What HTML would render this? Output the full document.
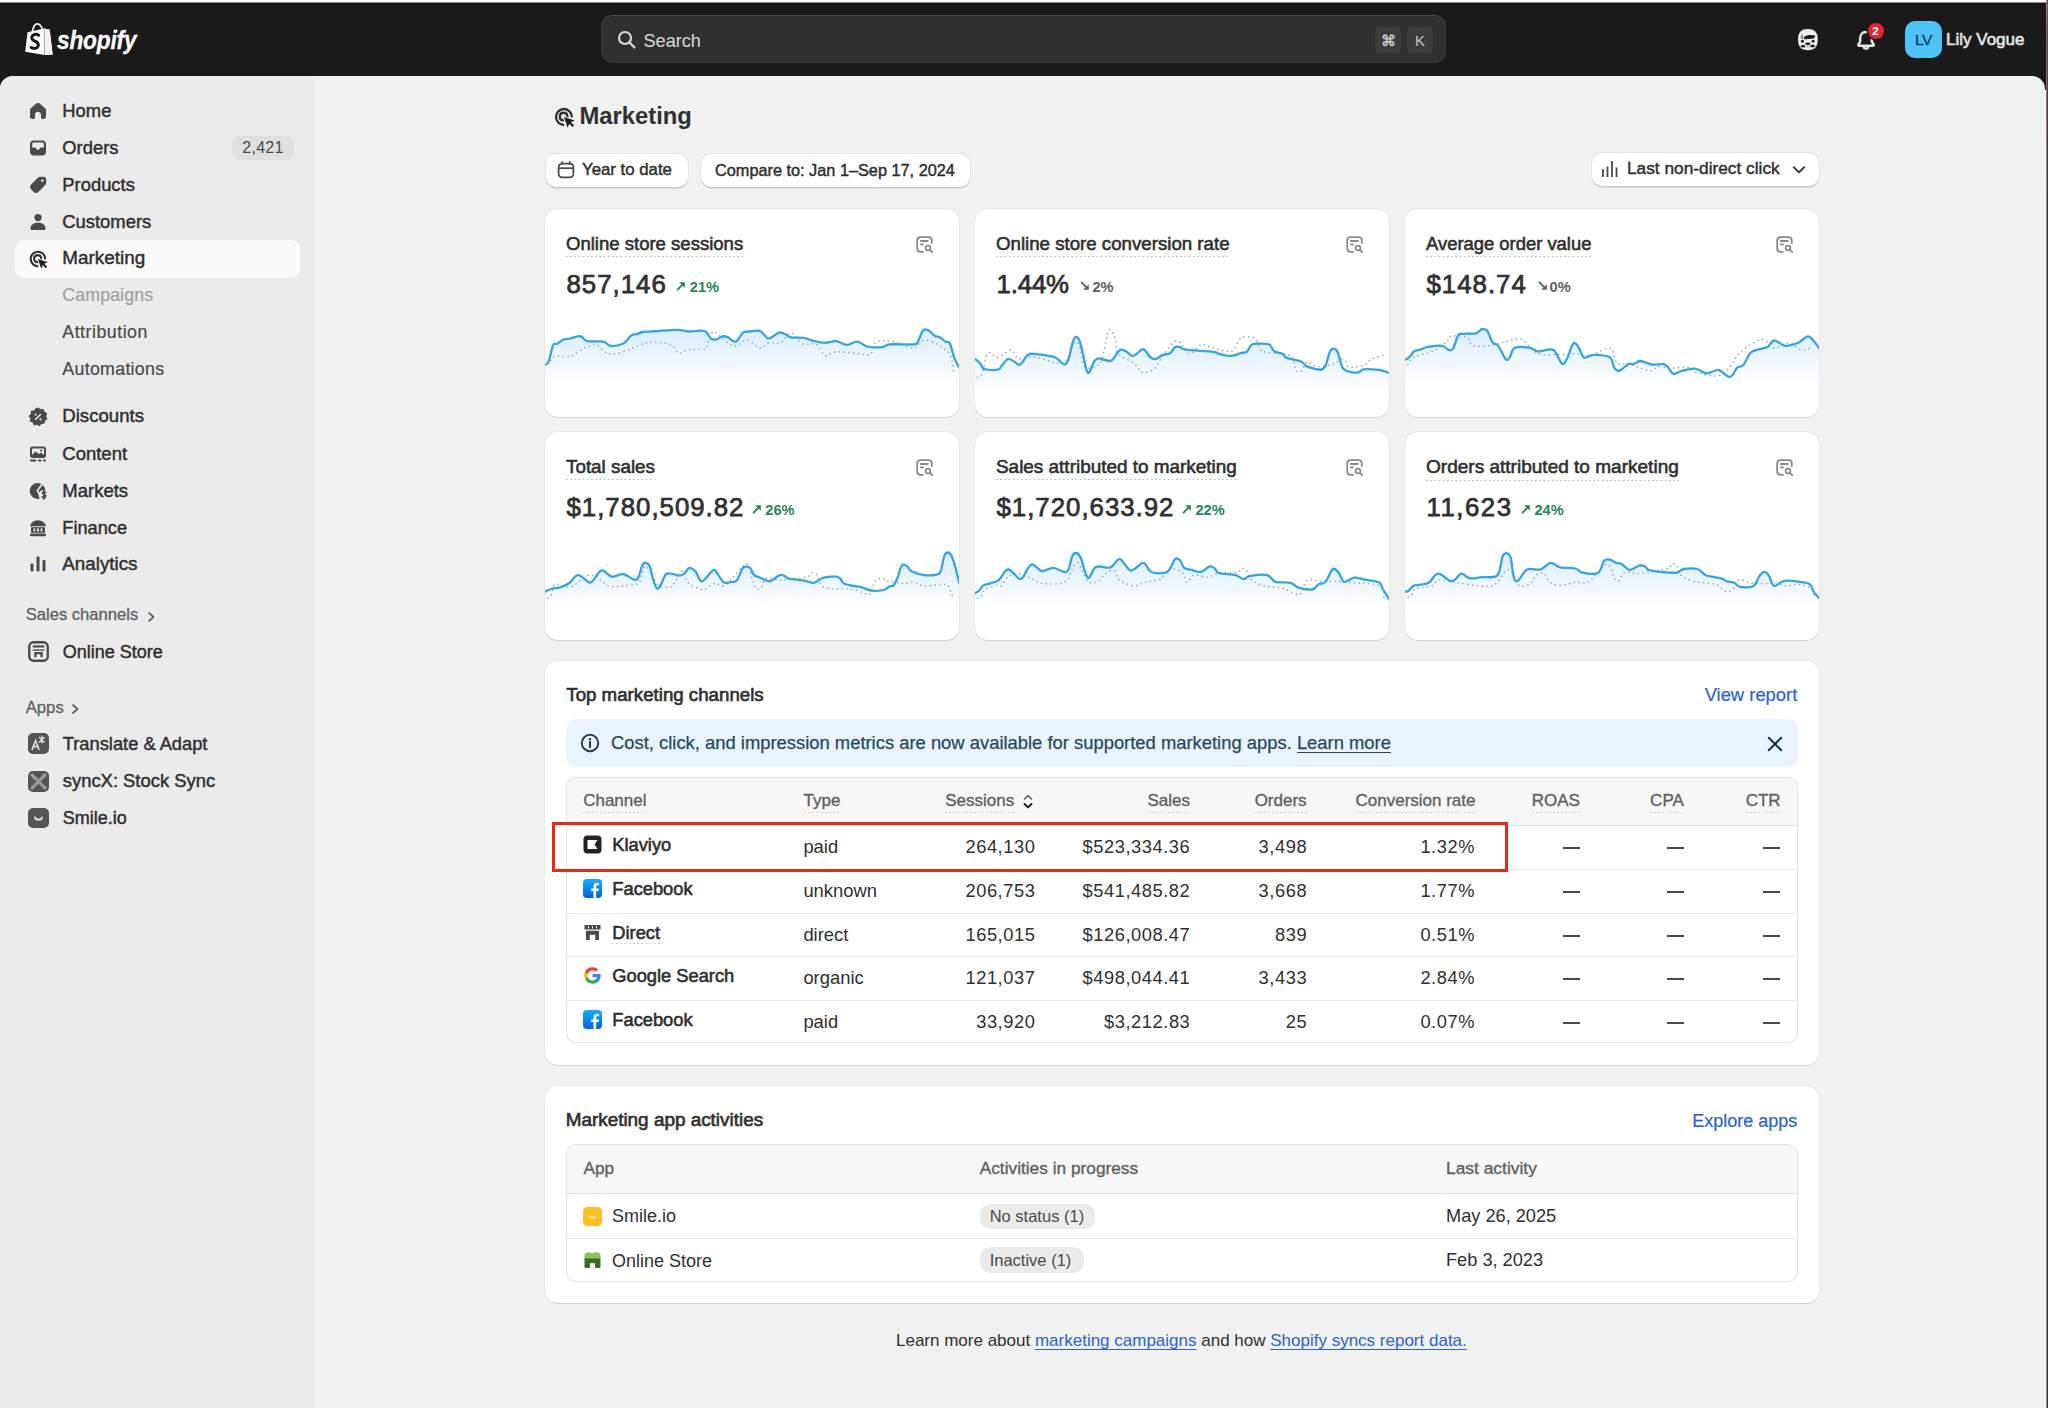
<!DOCTYPE html>
<html><head><meta charset="utf-8"><title>Marketing</title>
<style>
html,body{margin:0;padding:0;}
body{width:2048px;height:1408px;overflow:hidden;position:relative;background:#f1f1f1;font-family:"Liberation Sans",sans-serif;}
.r{position:absolute;display:block;}
.t{position:absolute;line-height:1;white-space:nowrap;}
.dot{background-image:linear-gradient(to right,#bdbdbd 45%,transparent 45%);background-size:4.2px 1.3px;background-repeat:repeat-x;background-position:0 100%;padding-bottom:3.5px;}
.dot2{background-image:linear-gradient(to right,#c4c4c4 45%,transparent 45%);background-size:4.2px 1.3px;background-repeat:repeat-x;background-position:0 100%;padding-bottom:3.5px;}
.dot3{background-image:linear-gradient(to right,#c4c4c4 45%,transparent 45%);background-size:4.2px 1.3px;background-repeat:repeat-x;background-position:0 100%;padding-bottom:2px;}
.lk{color:#2a64c9;text-decoration:underline;text-underline-offset:2.5px;text-decoration-thickness:1.2px;}
</style></head><body>
<div class="r" style="left:0px;top:0px;width:2048px;height:2px;background:#fdfdfd;"></div>
<div class="r" style="left:0px;top:2px;width:2048px;height:1px;background:#8c8c8c;"></div>
<div class="r" style="left:0px;top:3px;width:2048px;height:87px;background:#1a1a1a;"></div>
<div class="r" style="left:2046px;top:0px;width:1px;height:1408px;background:linear-gradient(#a08088 0,#806070 40px,#8a8890 200px,#8a8890);"></div>
<div class="r" style="left:2047px;top:0px;width:1px;height:1408px;background:linear-gradient(#7a5060 0,#6a4050 40px,#3c3a42 200px,#3c3a42);"></div>
<div class="r" style="left:0px;top:76px;width:2045px;height:1332px;background:#f1f1f1;border-radius:13px 13px 0 0;"></div>
<div class="r" style="left:2045px;top:90px;width:1px;height:1318px;background:#f8f8fb;"></div>
<div class="r" style="left:0px;top:76px;width:315px;height:1332px;background:#ebebeb;border-radius:13px 0 0 0;"></div>
<svg class="r" style="left:20px;top:18px;" width="40" height="42" viewBox="0 0 40 42"><path d="M7.5 14.3 L24.2 10.4 L29.7 11.7 L32.6 36.4 L24.4 37 L5.2 33.8 Z" fill="#fff"/><path d="M24.2 10.4 L29.7 11.7 L32.6 36.4 L24.4 37 Z" fill="#f3f3f3"/><path d="M24.3 10.8 L24.5 36.8" stroke="#a8a8a8" stroke-width="1"/><path d="M12.4 13.6 C13.4 8.6 15 5.9 17 5.9 C19 5.9 21 7.8 22.4 10.8" fill="none" stroke="#e6e6e6" stroke-width="1.9"/><path d="M18.7 17.4 C17.4 16.3 15.3 16.1 13.7 16.8 C11.6 17.7 11.3 20.3 12.7 21.7 C13.9 22.9 16.3 23.5 17.5 24.9 C19 26.5 18.3 29.3 16.1 30.1 C14.5 30.7 12.5 30.3 11.1 29.5" fill="none" stroke="#161616" stroke-width="3" stroke-linecap="round"/></svg>
<div class="t " style="left:56.5px;top:27.9px;font-size:25.2px;font-weight:700;-webkit-text-stroke:0.3px #ffffff;color:#ffffff;font-style:italic;letter-spacing:-0.2px;transform:scaleX(0.9);transform-origin:0 0;">shopify</div>
<div class="r" style="left:601px;top:15px;width:845px;height:48px;background:#303030;border-radius:12px;box-shadow:inset 0 1px 0 #474747, inset 0 0 0 1px #383838;"></div>
<svg class="r" style="left:617px;top:30px;" width="20" height="20" viewBox="0 0 20 20"><circle cx="8" cy="8" r="6" fill="none" stroke="#d8d8d8" stroke-width="2.2"/><path d="M12.4 12.4 L17.5 17.5" stroke="#d8d8d8" stroke-width="2.2" stroke-linecap="round"/></svg>
<div class="t " style="left:643.5px;top:31.7px;font-size:18.1px;-webkit-text-stroke:0.15px #d2d2d2;color:#d2d2d2;">Search</div>
<div class="r" style="left:1375px;top:27px;width:26px;height:26px;background:#3c3c3c;border-radius:6px;"></div>
<div class="r" style="left:1407px;top:27px;width:26px;height:26px;background:#3c3c3c;border-radius:6px;"></div>
<div class="t " style="left:1388.0px;transform:translateX(-50%);top:32.8px;font-size:15px;color:#c4c4c4;font-weight:700;">&#8984;</div>
<div class="t " style="left:1420.0px;transform:translateX(-50%);top:33.3px;font-size:15px;color:#c4c4c4;">K</div>
<svg class="r" style="left:1792px;top:24px;" width="32" height="32" viewBox="0 0 32 32"><path d="M15.9 5 C22.6 5 25.8 8.2 25.8 15.2 C25.8 22.6 22.8 26.2 15.9 26.2 C9 26.2 6 22.6 6 15.2 C6 8.2 9.2 5 15.9 5 Z" fill="#ececec"/><path d="M11.8 13.6 C13 11.2 17.5 10.4 23 11.6 C23.4 13 22.5 14.4 20.8 14.6 C17.5 15 15.2 15.4 13.4 15.2 C12.4 15.1 11.8 14.5 11.8 13.6 Z" fill="#161616"/><path d="M8.6 14.6 C8.8 12.6 9.4 11 10.6 10.2 C10.6 12 11 13.4 11.4 14.6 Z" fill="#161616" opacity="0.55"/><circle cx="10.4" cy="17.3" r="1.45" fill="#161616"/><circle cx="21.1" cy="17.3" r="1.45" fill="#161616"/><ellipse cx="15.8" cy="19.7" rx="2.7" ry="1.2" fill="#161616"/><ellipse cx="11" cy="22.2" rx="2.4" ry="1.3" fill="#161616"/><ellipse cx="20.6" cy="22.1" rx="2.4" ry="1.3" fill="#161616"/><ellipse cx="15.8" cy="22.6" rx="2.3" ry="1" fill="#b8b8b8"/></svg>
<svg class="r" style="left:1855px;top:29px;" width="22" height="22" viewBox="0 0 22 22"><path d="M11 3 C7.3 3 5.2 5.7 5.2 9.2 V12.6 L3.3 15.6 C3 16.1 3.4 16.8 4 16.8 H18 C18.6 16.8 19 16.1 18.7 15.6 L16.8 12.6 V9.2 C16.8 5.7 14.7 3 11 3 Z" fill="none" stroke="#e8e8e8" stroke-width="2.4"/><path d="M8.7 17.2 C8.7 18.6 9.7 19.6 11 19.6 C12.3 19.6 13.3 18.6 13.3 17.2" fill="none" stroke="#e8e8e8" stroke-width="2.4"/></svg>
<div class="r" style="left:1867.5px;top:22.5px;width:16.0px;height:16.0px;background:#e0262f;border-radius:50%;box-shadow:0 0 0 1.5px #1a1a1a;"></div>
<div class="t " style="left:1875.5px;transform:translateX(-50%);top:25.6px;font-size:11.5px;font-weight:700;color:#ffffff;">2</div>
<div class="r" style="left:1905px;top:21px;width:37px;height:37px;background:#4fc3f7;border-radius:10px;"></div>
<div class="t " style="left:1923.5px;transform:translateX(-50%);top:32.4px;font-size:15.5px;-webkit-text-stroke:0.3px #0a3a63;color:#0a3a63;letter-spacing:-0.5px;">LV</div>
<div class="t " style="left:1946.0px;top:30.6px;font-size:17.0px;-webkit-text-stroke:0.6px #e3e3e3;color:#e3e3e3;">Lily Vogue</div>
<div class="r" style="left:15px;top:240px;width:285px;height:38px;background:#fafafa;border-radius:9px;"></div>
<svg class="r" style="left:28px;top:101px;" width="20" height="20" viewBox="0 0 20 20"><path d="M8.3 2.6 C9.3 1.8 10.7 1.8 11.7 2.6 L16.9 7 C17.6 7.6 18 8.4 18 9.3 V15.8 C18 17 17 18 15.8 18 H14.4 C13.6 18 13 17.4 13 16.6 V13.8 C13 12.1 11.7 10.8 10 10.8 C8.3 10.8 7 12.1 7 13.8 V16.6 C7 17.4 6.4 18 5.6 18 H4.2 C3 18 2 17 2 15.8 V9.3 C2 8.4 2.4 7.6 3.1 7 Z" fill="#4a4a4a"/></svg>
<div class="t " style="left:62.3px;top:101.5px;font-size:18.4px;-webkit-text-stroke:0.45px #303030;color:#303030;">Home</div>
<svg class="r" style="left:28px;top:138px;" width="20" height="20" viewBox="0 0 20 20"><path d="M5.5 2.5 H14.5 C16.4 2.5 18 4.1 18 6 V14 C18 15.9 16.4 17.5 14.5 17.5 H5.5 C3.6 17.5 2 15.9 2 14 V6 C2 4.1 3.6 2.5 5.5 2.5 Z" fill="#4a4a4a"/><path d="M4.2 9.6 H6.8 C7.4 9.6 7.8 9.9 8.1 10.3 L8.7 11.2 C9 11.6 9.5 11.9 10 11.9 C10.5 11.9 11 11.6 11.3 11.2 L11.9 10.3 C12.2 9.9 12.6 9.6 13.2 9.6 H15.8 V6 C15.8 5.2 15.2 4.6 14.4 4.6 H5.6 C4.8 4.6 4.2 5.2 4.2 6 Z" fill="#ebebeb"/></svg>
<div class="t " style="left:62.3px;top:138.5px;font-size:18.4px;-webkit-text-stroke:0.45px #303030;color:#303030;">Orders</div>
<svg class="r" style="left:28px;top:175px;" width="20" height="20" viewBox="0 0 20 20"><path d="M12.2 1.8 H15.6 C17.1 1.8 18.2 2.9 18.2 4.4 V7.8 C18.2 8.7 17.8 9.5 17.2 10.1 L10.4 16.9 C9.1 18.2 7 18.2 5.7 16.9 L3.1 14.3 C1.8 13 1.8 10.9 3.1 9.6 L9.9 2.8 C10.5 2.2 11.3 1.8 12.2 1.8 Z" fill="#4a4a4a"/><circle cx="14.4" cy="5.6" r="1.3" fill="#dcdcdc"/></svg>
<div class="t " style="left:62.3px;top:175.5px;font-size:18.4px;-webkit-text-stroke:0.45px #303030;color:#303030;">Products</div>
<svg class="r" style="left:28px;top:212px;" width="20" height="20" viewBox="0 0 20 20"><circle cx="10" cy="5.6" r="3.6" fill="#4a4a4a"/><path d="M2.5 16.5 C2.5 12.8 5.8 10.8 10 10.8 C14.2 10.8 17.5 12.8 17.5 16.5 C17.5 17.3 16.9 18 16 18 H4 C3.1 18 2.5 17.3 2.5 16.5 Z" fill="#4a4a4a"/></svg>
<div class="t " style="left:62.3px;top:212.7px;font-size:18.4px;-webkit-text-stroke:0.45px #303030;color:#303030;">Customers</div>
<svg class="r" style="left:28px;top:249px;" width="20" height="20" viewBox="0 0 20 20"><path d="M17.1 9.4 A7.2 7.2 0 1 0 9.4 17.1" fill="none" stroke="#303030" stroke-width="2.1" stroke-linecap="round"/><path d="M13.1 9.2 A3.5 3.5 0 1 0 9.2 13.1" fill="none" stroke="#303030" stroke-width="2.1" stroke-linecap="round"/><path d="M10 10 L19.8 13.2 L16.2 14.8 L19.2 17.8 L17.8 19.2 L14.8 16.2 L13.2 19.8 Z" fill="#1f1f1f"/></svg>
<div class="t " style="left:62.3px;top:249.3px;font-size:18.9px;-webkit-text-stroke:0.45px #303030;color:#303030;">Marketing</div>
<svg class="r" style="left:28px;top:407px;" width="20" height="20" viewBox="0 0 20 20"><path transform="translate(10 10) scale(1.12) translate(-10 -10)" d="M10 1.5 L12.3 3 L15 2.8 L15.8 5.4 L18.2 6.7 L17.3 9.3 L18.5 11.8 L16.2 13.3 L15.8 16 L13 16.2 L11.2 18.3 L8.9 16.9 L6.2 17.6 L5.3 15 L2.6 14 L3.2 11.3 L1.5 9.2 L3.5 7.3 L3.7 4.5 L6.4 4.1 L8 1.9 Z" fill="#4a4a4a"/><path d="M7.2 12.8 L12.8 7.2" stroke="#ebebeb" stroke-width="1.6"/><circle cx="7.6" cy="7.6" r="1.1" fill="#ebebeb"/><circle cx="12.4" cy="12.4" r="1.1" fill="#ebebeb"/></svg>
<div class="t " style="left:62.3px;top:407.4px;font-size:18.6px;-webkit-text-stroke:0.45px #303030;color:#303030;">Discounts</div>
<svg class="r" style="left:28px;top:444px;" width="20" height="20" viewBox="0 0 20 20"><path d="M4.5 2.5 H15.5 C16.9 2.5 18 3.6 18 5 V11.5 C18 12.9 16.9 14 15.5 14 H4.5 C3.1 14 2 12.9 2 11.5 V5 C2 3.6 3.1 2.5 4.5 2.5 Z" fill="#4a4a4a"/><path d="M4 11 L7.5 7.5 L11 10 L13 8.5 L16 11 V5.2 C16 4.8 15.7 4.5 15.3 4.5 H4.7 C4.3 4.5 4 4.8 4 5.2 Z" fill="#ebebeb"/><circle cx="13.2" cy="6.6" r="1.1" fill="#4a4a4a"/><rect x="2" y="15.6" width="6.5" height="1.9" rx=".9" fill="#4a4a4a"/><rect x="10" y="15.6" width="3.5" height="1.9" rx=".9" fill="#4a4a4a"/><rect x="15" y="15.6" width="3" height="1.9" rx=".9" fill="#4a4a4a"/></svg>
<div class="t " style="left:62.3px;top:444.7px;font-size:18.5px;-webkit-text-stroke:0.45px #303030;color:#303030;">Content</div>
<svg class="r" style="left:28px;top:481px;" width="20" height="20" viewBox="0 0 20 20"><circle cx="9.6" cy="10" r="7.9" fill="#4a4a4a"/><path d="M14.2 3.2 L9.4 9.6 L12.4 14.6" fill="none" stroke="#ebebeb" stroke-width="1.7"/><circle cx="15.6" cy="14" r="5" fill="#ebebeb"/><path d="M17.6 11.4 C17.1 10.9 16.4 10.7 15.7 10.8 C14.6 11 14.3 12.3 15.1 12.9 C15.8 13.4 17.3 13.6 17.6 14.7 C17.9 15.8 17 16.8 15.8 16.8 C15 16.8 14.4 16.5 14 16 M15.8 9.6 V18.2" fill="none" stroke="#4a4a4a" stroke-width="1.6" stroke-linecap="round"/></svg>
<div class="t " style="left:62.3px;top:481.5px;font-size:18.5px;-webkit-text-stroke:0.45px #303030;color:#303030;">Markets</div>
<svg class="r" style="left:28px;top:518px;" width="20" height="20" viewBox="0 0 20 20"><path d="M2 8.2 C2.4 5.2 5.8 2.2 10 2.2 C14.2 2.2 17.6 5.2 18 8.2 Z" fill="#4a4a4a"/><rect x="3" y="9.2" width="14" height="5.6" fill="#4a4a4a"/><rect x="5.6" y="10.4" width="1.7" height="3.2" fill="#ebebeb"/><rect x="9.15" y="10.4" width="1.7" height="3.2" fill="#ebebeb"/><rect x="12.7" y="10.4" width="1.7" height="3.2" fill="#ebebeb"/><rect x="2" y="15.4" width="16" height="2.8" rx="1.2" fill="#4a4a4a"/></svg>
<div class="t " style="left:62.3px;top:518.8px;font-size:18.2px;-webkit-text-stroke:0.45px #303030;color:#303030;">Finance</div>
<svg class="r" style="left:28px;top:554px;" width="20" height="20" viewBox="0 0 20 20"><rect x="2.5" y="9.5" width="3" height="8" rx="1" fill="#4a4a4a"/><rect x="8.5" y="2.5" width="3" height="15" rx="1" fill="#4a4a4a"/><rect x="14.5" y="6" width="3" height="11.5" rx="1" fill="#4a4a4a"/></svg>
<div class="t " style="left:62.3px;top:555.1px;font-size:18.8px;-webkit-text-stroke:0.45px #303030;color:#303030;">Analytics</div>
<div class="r" style="left:232px;top:136px;width:62px;height:24px;background:#e0e0e0;border-radius:8px;"></div>
<div class="t " style="left:263.0px;transform:translateX(-50%);top:140.2px;font-size:16px;color:#4a4a4a;letter-spacing:0.3px;">2,421</div>
<div class="t " style="left:62.3px;top:287.4px;font-size:17.8px;-webkit-text-stroke:0.2px #a1a1a1;color:#a1a1a1;letter-spacing:0.1px;">Campaigns</div>
<div class="t " style="left:62.3px;top:324.2px;font-size:17.8px;-webkit-text-stroke:0.2px #4a4a4a;color:#4a4a4a;letter-spacing:0.5px;">Attribution</div>
<div class="t " style="left:62.3px;top:360.9px;font-size:17.8px;-webkit-text-stroke:0.2px #4a4a4a;color:#4a4a4a;letter-spacing:0.3px;">Automations</div>
<div class="t " style="left:25.7px;top:607.2px;font-size:16.6px;-webkit-text-stroke:0.3px #616161;color:#616161;">Sales channels</div>
<svg class="r" style="left:146px;top:611px;" width="10" height="12" viewBox="0 0 10 12"><path d="M3 2 L7.5 6 L3 10" fill="none" stroke="#616161" stroke-width="1.7" stroke-linecap="round" stroke-linejoin="round"/></svg>
<svg class="r" style="left:28px;top:641px;" width="21" height="21" viewBox="0 0 20 20"><rect x="1.2" y="1.2" width="17.6" height="17.6" rx="4" fill="none" stroke="#4a4a4a" stroke-width="2.2"/><rect x="4.5" y="4.2" width="11" height="2" fill="#4a4a4a"/><path d="M4.5 8 H15.5 V9.3 H4.5 Z" fill="#4a4a4a"/><path d="M6 10.5 H14 V15.5 H11.8 V12.5 H8.2 V15.5 H6 Z" fill="#4a4a4a"/></svg>
<div class="t " style="left:62.8px;top:642.8px;font-size:18.0px;-webkit-text-stroke:0.45px #303030;color:#303030;">Online Store</div>
<div class="t " style="left:25.7px;top:699.9px;font-size:16.7px;-webkit-text-stroke:0.3px #616161;color:#616161;">Apps</div>
<svg class="r" style="left:70px;top:703px;" width="10" height="12" viewBox="0 0 10 12"><path d="M3 2 L7.5 6 L3 10" fill="none" stroke="#616161" stroke-width="1.7" stroke-linecap="round" stroke-linejoin="round"/></svg>
<svg class="r" style="left:28px;top:733px;" width="21" height="21" viewBox="0 0 21 21"><rect x="0" y="0" width="21" height="21" rx="5" fill="#555"/><path d="M4 17 L7.6 7.5 L11.2 17 M5.4 13.6 H9.8" stroke="#ddd" stroke-width="1.6" fill="none"/><path d="M11 4 L16.5 9.5 M16.5 4 L11 9.5 M13.8 2.8 V10.6" stroke="#ddd" stroke-width="1.3"/></svg>
<div class="t " style="left:62.8px;top:735.1px;font-size:18.3px;-webkit-text-stroke:0.45px #303030;color:#303030;">Translate &amp; Adapt</div>
<svg class="r" style="left:28px;top:771px;" width="21" height="21" viewBox="0 0 21 21"><rect x="0" y="0" width="21" height="21" rx="5" fill="#555"/><path d="M4 4 C8 7.5 13 13.5 17 17 M17 4 C13 7.5 8 13.5 4 17" stroke="#9a9a9a" stroke-width="3.2" fill="none" stroke-linecap="round"/></svg>
<div class="t " style="left:62.8px;top:772.1px;font-size:18.4px;-webkit-text-stroke:0.45px #303030;color:#303030;">syncX: Stock Sync</div>
<svg class="r" style="left:28px;top:808px;" width="21" height="20" viewBox="0 0 21 20"><rect x="0" y="0" width="21" height="20" rx="5" fill="#555"/><path d="M7 9.5 C7.5 12.5 13.5 12.5 14 9.5" stroke="#e8e8e8" stroke-width="1.8" fill="none" stroke-linecap="round"/></svg>
<div class="t " style="left:62.8px;top:809.0px;font-size:18.0px;-webkit-text-stroke:0.45px #303030;color:#303030;">Smile.io</div>
<svg class="r" style="left:553px;top:106px;" width="22" height="22" viewBox="0 0 20 20"><path d="M17.1 9.4 A7.2 7.2 0 1 0 9.4 17.1" fill="none" stroke="#303030" stroke-width="2.1" stroke-linecap="round"/><path d="M13.1 9.2 A3.5 3.5 0 1 0 9.2 13.1" fill="none" stroke="#303030" stroke-width="2.1" stroke-linecap="round"/><path d="M10 10 L19.8 13.2 L16.2 14.8 L19.2 17.8 L17.8 19.2 L14.8 16.2 L13.2 19.8 Z" fill="#1f1f1f"/></svg>
<div class="t " style="left:579.5px;top:104.0px;font-size:23.8px;font-weight:700;color:#303030;">Marketing</div>
<div class="r" style="left:546px;top:154px;width:142px;height:33px;background:#fff;border-radius:10px;box-shadow:0 1.5px 0 #c9c9c9, 0 0 0 1px #e4e4e4;"></div>
<svg class="r" style="left:557px;top:161px;" width="18" height="18" viewBox="0 0 18 18"><rect x="1.6" y="2.6" width="14.8" height="13.8" rx="3.6" fill="none" stroke="#4a4a4a" stroke-width="1.8"/><path d="M1.8 7.2 H16.2" stroke="#4a4a4a" stroke-width="1.8"/><path d="M5.2 0.8 V3 M12.8 0.8 V3" stroke="#4a4a4a" stroke-width="1.6" stroke-linecap="round"/></svg>
<div class="t " style="left:582.0px;top:162.3px;font-size:16.8px;-webkit-text-stroke:0.45px #303030;color:#303030;">Year to date</div>
<div class="r" style="left:701px;top:154px;width:269px;height:33px;background:#fff;border-radius:10px;box-shadow:0 1.5px 0 #c9c9c9, 0 0 0 1px #e4e4e4;"></div>
<div class="t " style="left:715.0px;top:161.6px;font-size:16.3px;-webkit-text-stroke:0.45px #303030;color:#303030;">Compare to: Jan 1–Sep 17, 2024</div>
<div class="r" style="left:1592px;top:153px;width:227px;height:33px;background:#fff;border-radius:10px;box-shadow:0 1.5px 0 #c9c9c9, 0 0 0 1px #e4e4e4;"></div>
<svg class="r" style="left:1601px;top:160px;" width="20" height="18" viewBox="0 0 20 18"><path d="M2 9 V17 M6.5 6.5 V17 M11 1 V17 M15.5 7.5 V17" stroke="#4a4a4a" stroke-width="1.8"/></svg>
<div class="t " style="left:1627.0px;top:159.9px;font-size:17.3px;-webkit-text-stroke:0.45px #303030;color:#303030;">Last non-direct click</div>
<svg class="r" style="left:1792px;top:165px;" width="14" height="10" viewBox="0 0 14 10"><path d="M1.8 2.2 L7 7.4 L12.2 2.2" fill="none" stroke="#303030" stroke-width="1.9" stroke-linecap="round" stroke-linejoin="round"/></svg>
<div class="r" style="left:545px;top:209px;width:414px;height:208px;background:#fff;border-radius:13px;box-shadow:0 1px 0 #d4d4d4, 0 0 0 1px #e9e9e9;"></div>
<svg class="r" style="left:545px;top:209px;border-radius:13px;overflow:hidden" width="414" height="208" viewBox="0 0 414 208"><defs><linearGradient id="g0" x1="0" y1="121" x2="0" y2="183" gradientUnits="userSpaceOnUse"><stop offset="0" stop-color="#d3e9f8" stop-opacity="0.85"/><stop offset="0.55" stop-color="#e6f2fb" stop-opacity="0.6"/><stop offset="1" stop-color="#ffffff" stop-opacity="0"/></linearGradient><clipPath id="c0"><rect x="0" y="0" width="414" height="208" rx="13"/></clipPath></defs><g clip-path="url(#c0)"><path d="M-0.2 155.8 C0.4 155.3 2.3 155.8 3.6 152.6 C5.0 149.4 6.5 139.4 7.9 136.4 C9.3 133.4 10.4 135.8 12.2 134.8 C14.0 133.8 16.5 131.4 18.6 130.5 C20.8 129.6 22.8 130.0 25.1 129.5 C27.4 129.0 30.6 127.6 32.6 127.3 C34.6 127.0 35.3 127.1 36.9 127.9 C38.5 128.7 38.7 131.4 42.3 132.2 C45.9 133.0 54.5 131.9 58.4 132.7 C62.3 133.5 62.5 136.7 65.9 137.0 C69.3 137.3 75.4 136.1 78.8 134.3 C82.2 132.5 84.1 127.7 86.3 126.2 C88.4 124.7 89.7 125.7 91.7 125.2 C93.7 124.7 94.5 123.5 98.1 123.0 C101.7 122.5 107.5 122.4 113.2 122.0 C118.9 121.6 127.5 120.8 132.5 120.9 C137.5 121.0 138.7 122.3 143.2 122.5 C147.7 122.7 155.6 120.8 159.4 122.0 C163.2 123.2 163.8 128.1 165.8 129.5 C167.8 130.9 169.2 130.9 171.2 130.5 C173.2 130.1 175.6 127.7 177.6 127.3 C179.6 127.0 181.4 127.7 183.0 128.4 C184.6 129.1 185.9 131.0 187.3 131.6 C188.7 132.2 189.8 133.5 191.6 132.2 C193.4 130.9 195.8 125.2 198.0 123.6 C200.2 122.0 201.7 122.8 204.5 122.5 C207.3 122.2 211.8 120.8 214.7 121.9 C217.7 123.0 220.2 127.8 222.2 128.9 C224.2 130.0 224.5 129.3 226.5 128.4 C228.5 127.5 231.7 124.1 234.0 123.6 C236.3 123.1 238.4 124.4 240.4 125.2 C242.4 126.0 242.7 127.8 245.8 128.4 C248.8 129.0 255.1 128.4 258.7 128.9 C262.3 129.4 263.7 130.8 267.3 131.6 C270.9 132.4 276.3 133.7 280.2 133.8 C284.1 133.9 287.3 131.8 290.9 132.2 C294.5 132.5 298.1 135.8 301.7 135.9 C305.3 136.0 309.0 132.4 312.4 132.7 C315.8 133.0 318.0 136.6 322.1 137.5 C326.2 138.4 333.3 138.5 337.1 138.1 C340.9 137.8 339.5 135.8 344.7 135.4 C349.9 134.9 363.6 135.8 368.3 135.4 C372.9 135.0 371.0 135.5 372.6 133.2 C374.2 130.9 376.2 123.4 378.0 121.4 C379.8 119.4 381.3 120.5 383.3 121.4 C385.3 122.3 387.8 125.6 389.8 126.8 C391.8 128.0 393.3 127.4 395.1 128.4 C396.9 129.4 398.9 131.7 400.5 132.7 C402.1 133.7 403.4 131.7 404.8 134.3 C406.2 136.9 407.6 144.4 409.1 148.3 C410.6 152.2 413.1 156.3 413.9 157.9 L413.9 208 L-0.2 208 Z" fill="url(#g0)"/><path d="M5.7 151.5 C6.4 150.8 7.3 147.8 10.0 147.2 C12.7 146.6 19.0 147.8 21.9 147.7 C24.8 147.6 24.2 148.2 27.2 146.7 C30.2 145.2 36.0 140.4 40.1 138.6 C44.2 136.8 48.7 135.2 51.9 135.9 C55.1 136.6 56.6 141.4 59.5 142.9 C62.4 144.4 64.8 145.4 69.1 145.0 C73.4 144.6 80.2 142.0 85.2 140.2 C90.2 138.4 95.1 135.5 99.2 134.3 C103.3 133.1 105.5 132.9 110.0 133.2 C114.5 133.5 122.2 134.1 126.1 135.9 C130.0 137.7 130.6 143.2 133.6 144.0 C136.6 144.8 139.8 141.4 144.3 140.7 C148.8 140.0 157.3 140.8 160.4 139.7 C163.4 138.6 161.5 137.0 162.6 134.3 C163.7 131.6 165.5 125.3 166.9 123.6 C168.3 121.9 167.6 121.9 171.2 124.1 C174.8 126.3 183.2 135.8 188.4 137.0 C193.6 138.2 197.9 130.8 202.3 131.1 C206.7 131.5 211.0 138.7 214.7 139.1 C218.4 139.6 220.9 134.7 224.3 133.8 C227.7 132.9 231.3 135.4 235.1 133.8 C238.9 132.2 243.1 123.9 246.9 124.1 C250.6 124.3 253.5 132.9 257.6 134.8 C261.7 136.7 267.8 133.4 271.6 135.4 C275.4 137.4 277.0 145.4 280.2 146.7 C283.4 147.9 285.5 143.3 290.9 142.9 C296.3 142.5 307.0 144.0 312.4 144.5 C317.8 145.0 320.7 146.5 323.2 146.1 C325.7 145.8 326.1 144.6 327.5 142.4 C328.9 140.2 328.2 134.3 331.8 132.7 C335.4 131.1 342.9 131.6 349.0 132.7 C355.1 133.8 362.9 139.4 368.3 139.1 C373.7 138.8 375.3 130.3 381.2 131.1 C387.1 131.9 399.1 138.3 403.7 144.0 C408.4 149.7 408.2 161.9 409.1 165.5" fill="none" stroke="#93aebd" stroke-width="1.6" stroke-dasharray="0.2 4.6" stroke-linecap="round"/><path d="M-0.2 155.8 C0.4 155.3 2.3 155.8 3.6 152.6 C5.0 149.4 6.5 139.4 7.9 136.4 C9.3 133.4 10.4 135.8 12.2 134.8 C14.0 133.8 16.5 131.4 18.6 130.5 C20.8 129.6 22.8 130.0 25.1 129.5 C27.4 129.0 30.6 127.6 32.6 127.3 C34.6 127.0 35.3 127.1 36.9 127.9 C38.5 128.7 38.7 131.4 42.3 132.2 C45.9 133.0 54.5 131.9 58.4 132.7 C62.3 133.5 62.5 136.7 65.9 137.0 C69.3 137.3 75.4 136.1 78.8 134.3 C82.2 132.5 84.1 127.7 86.3 126.2 C88.4 124.7 89.7 125.7 91.7 125.2 C93.7 124.7 94.5 123.5 98.1 123.0 C101.7 122.5 107.5 122.4 113.2 122.0 C118.9 121.6 127.5 120.8 132.5 120.9 C137.5 121.0 138.7 122.3 143.2 122.5 C147.7 122.7 155.6 120.8 159.4 122.0 C163.2 123.2 163.8 128.1 165.8 129.5 C167.8 130.9 169.2 130.9 171.2 130.5 C173.2 130.1 175.6 127.7 177.6 127.3 C179.6 127.0 181.4 127.7 183.0 128.4 C184.6 129.1 185.9 131.0 187.3 131.6 C188.7 132.2 189.8 133.5 191.6 132.2 C193.4 130.9 195.8 125.2 198.0 123.6 C200.2 122.0 201.7 122.8 204.5 122.5 C207.3 122.2 211.8 120.8 214.7 121.9 C217.7 123.0 220.2 127.8 222.2 128.9 C224.2 130.0 224.5 129.3 226.5 128.4 C228.5 127.5 231.7 124.1 234.0 123.6 C236.3 123.1 238.4 124.4 240.4 125.2 C242.4 126.0 242.7 127.8 245.8 128.4 C248.8 129.0 255.1 128.4 258.7 128.9 C262.3 129.4 263.7 130.8 267.3 131.6 C270.9 132.4 276.3 133.7 280.2 133.8 C284.1 133.9 287.3 131.8 290.9 132.2 C294.5 132.5 298.1 135.8 301.7 135.9 C305.3 136.0 309.0 132.4 312.4 132.7 C315.8 133.0 318.0 136.6 322.1 137.5 C326.2 138.4 333.3 138.5 337.1 138.1 C340.9 137.8 339.5 135.8 344.7 135.4 C349.9 134.9 363.6 135.8 368.3 135.4 C372.9 135.0 371.0 135.5 372.6 133.2 C374.2 130.9 376.2 123.4 378.0 121.4 C379.8 119.4 381.3 120.5 383.3 121.4 C385.3 122.3 387.8 125.6 389.8 126.8 C391.8 128.0 393.3 127.4 395.1 128.4 C396.9 129.4 398.9 131.7 400.5 132.7 C402.1 133.7 403.4 131.7 404.8 134.3 C406.2 136.9 407.6 144.4 409.1 148.3 C410.6 152.2 413.1 156.3 413.9 157.9" fill="none" stroke="#35a5dd" stroke-width="2.3" stroke-linejoin="round" stroke-linecap="round"/></g></svg>
<div class="t " style="left:566.0px;top:234.8px;font-size:18.54px;-webkit-text-stroke:0.6px #303030;color:#303030;"><span class="dot">Online store sessions</span></div>
<svg class="r" style="left:915px;top:235px;" width="19" height="19" viewBox="0 0 19 19"><path d="M8 16.8 H5.5 C3.6 16.8 2.2 15.4 2.2 13.5 V5.5 C2.2 3.6 3.6 2.2 5.5 2.2 H13.5 C15.4 2.2 16.8 3.6 16.8 5.5 V8" fill="none" stroke="#8a8a8a" stroke-width="1.8" stroke-linecap="round"/><path d="M5.8 6 H12.8 M5.8 9.4 H8" stroke="#8a8a8a" stroke-width="1.8" stroke-linecap="round"/><circle cx="13" cy="13" r="2.4" fill="none" stroke="#8a8a8a" stroke-width="1.7"/><path d="M14.8 14.8 L17.2 17.2" stroke="#8a8a8a" stroke-width="1.8" stroke-linecap="round"/></svg>
<div class="t val0" style="left:566.5px;top:271.9px;font-size:25.8px;-webkit-text-stroke:0.75px #303030;color:#303030;letter-spacing:1.0px;">857,146</div>
<div class="r" style="left:975px;top:209px;width:414px;height:208px;background:#fff;border-radius:13px;box-shadow:0 1px 0 #d4d4d4, 0 0 0 1px #e9e9e9;"></div>
<svg class="r" style="left:975px;top:209px;border-radius:13px;overflow:hidden" width="414" height="208" viewBox="0 0 414 208"><defs><linearGradient id="g1" x1="0" y1="128" x2="0" y2="190" gradientUnits="userSpaceOnUse"><stop offset="0" stop-color="#d3e9f8" stop-opacity="0.85"/><stop offset="0.55" stop-color="#e6f2fb" stop-opacity="0.6"/><stop offset="1" stop-color="#ffffff" stop-opacity="0"/></linearGradient><clipPath id="c1"><rect x="0" y="0" width="414" height="208" rx="13"/></clipPath></defs><g clip-path="url(#c1)"><path d="M0.1 150.0 C1.0 150.8 3.7 152.9 5.3 154.6 C6.8 156.3 6.5 159.2 9.4 160.2 C12.3 161.2 19.8 161.3 22.7 160.7 C25.6 160.1 25.1 158.4 26.8 156.6 C28.5 154.8 30.8 150.7 32.9 150.0 C34.9 149.3 37.1 151.6 39.1 152.5 C41.2 153.4 43.0 156.6 45.2 155.6 C47.4 154.6 50.2 148.2 52.4 146.4 C54.6 144.6 54.5 144.6 58.6 144.8 C62.7 145.0 72.9 146.4 77.0 147.4 C81.1 148.3 81.2 149.1 83.2 150.5 C85.3 151.9 87.6 155.6 89.3 155.6 C91.0 155.6 92.0 154.1 93.4 150.5 C94.8 146.9 96.3 137.9 97.5 134.1 C98.7 130.3 99.4 128.2 100.6 127.9 C101.8 127.5 103.5 129.3 104.7 132.0 C105.9 134.7 106.4 139.0 107.8 144.3 C109.2 149.6 111.0 162.4 112.9 163.8 C114.8 165.2 117.4 154.9 119.1 152.5 C120.8 150.1 121.7 149.8 123.2 149.5 C124.7 149.2 126.1 150.2 128.3 150.5 C130.5 150.8 133.8 153.1 136.5 151.5 C139.2 149.9 142.3 142.7 144.7 141.2 C147.1 139.7 148.9 141.4 150.9 142.3 C153.0 143.2 155.3 146.4 157.0 146.9 C158.7 147.4 159.2 146.4 161.1 145.3 C163.0 144.2 165.9 139.7 168.3 140.2 C170.7 140.7 173.5 146.8 175.5 148.4 C177.5 150.0 178.5 150.4 180.6 150.0 C182.6 149.6 185.4 146.8 187.8 145.9 C190.2 144.9 193.0 145.6 195.0 144.3 C197.0 143.0 198.4 139.2 200.1 138.2 C201.8 137.2 203.1 137.8 205.0 138.2 C206.9 138.6 205.7 139.9 211.2 140.7 C216.7 141.5 232.3 142.1 237.8 142.8 C243.3 143.5 240.9 144.1 244.0 144.8 C247.1 145.5 252.5 147.1 256.3 146.9 C260.0 146.7 263.9 144.5 266.5 143.8 C269.1 143.1 270.0 144.2 271.7 142.8 C273.4 141.4 274.7 137.0 276.8 135.6 C278.8 134.2 281.1 134.6 284.0 134.6 C286.9 134.6 291.7 134.3 294.2 135.6 C296.8 136.9 297.1 140.8 299.3 142.3 C301.5 143.8 305.4 143.7 307.5 144.8 C309.6 145.9 308.5 147.6 311.6 148.9 C314.7 150.2 322.8 151.1 326.0 152.5 C329.2 153.9 329.2 156.0 331.1 157.1 C333.0 158.2 334.7 158.6 337.3 159.2 C339.9 159.8 344.3 161.1 346.5 160.7 C348.7 160.3 349.2 159.5 350.6 156.6 C352.0 153.7 353.3 146.1 354.7 143.3 C356.1 140.5 357.4 139.6 358.8 139.7 C360.2 139.8 361.4 140.6 362.9 143.8 C364.4 147.1 365.6 155.9 368.0 159.2 C370.4 162.4 374.7 162.6 377.3 163.3 C379.9 164.0 381.4 163.8 383.4 163.3 C385.5 162.8 386.0 160.5 389.6 160.2 C393.2 159.8 400.9 160.6 405.0 161.2 C409.1 161.8 412.7 163.4 414.2 163.8 L414.2 208 L0.1 208 Z" fill="url(#g1)"/><path d="M2.7 168.4 C3.5 167.7 5.6 168.3 7.3 164.3 C9.0 160.3 10.3 147.0 12.9 144.3 C15.5 141.7 18.9 148.9 22.7 148.4 C26.6 147.9 32.6 141.0 36.0 141.2 C39.4 141.4 39.8 148.5 43.2 149.5 C46.6 150.5 51.0 146.9 56.5 147.4 C62.0 147.9 71.7 151.4 76.0 152.5 C80.3 153.6 79.5 154.4 82.2 154.1 C84.9 153.8 89.7 153.7 92.4 150.5 C95.1 147.3 96.7 137.7 98.6 135.1 C100.5 132.5 101.8 131.3 103.7 135.1 C105.6 138.9 106.4 154.4 109.8 157.7 C113.2 161.0 121.0 158.0 124.2 155.1 C127.5 152.2 127.9 145.2 129.3 140.2 C130.7 135.1 131.4 128.1 132.4 124.8 C133.4 121.6 134.1 119.8 135.5 120.7 C136.9 121.6 139.4 126.1 140.6 130.0 C141.8 133.9 139.8 140.4 142.7 144.3 C145.6 148.2 154.2 150.8 158.0 153.6 C161.8 156.4 163.3 159.5 165.2 161.2 C167.1 162.9 166.9 164.1 169.3 163.8 C171.7 163.6 176.7 162.3 179.6 159.7 C182.5 157.1 183.7 152.7 186.8 148.4 C189.9 144.1 195.0 136.7 198.0 134.1 C201.0 131.5 202.3 131.2 205.0 133.0 C207.7 134.8 210.6 144.4 214.2 144.8 C217.8 145.2 222.7 136.6 226.5 135.6 C230.3 134.6 231.8 137.6 236.8 138.7 C241.8 139.8 251.7 143.7 256.3 142.3 C260.9 140.9 262.4 132.9 264.5 130.5 C266.6 128.1 266.5 128.1 269.1 127.9 C271.7 127.7 276.7 127.1 279.9 129.5 C283.1 131.9 282.3 139.5 288.1 142.3 C293.9 145.1 309.2 143.2 314.7 146.4 C320.2 149.5 318.9 158.6 320.9 161.2 C323.0 163.8 325.1 163.2 327.0 161.8 C328.9 160.4 329.5 153.7 332.1 153.0 C334.7 152.3 338.1 157.3 342.4 157.7 C346.7 158.0 353.9 156.3 357.8 155.1 C361.7 153.9 363.8 150.8 366.0 150.5 C368.2 150.2 369.7 151.7 371.1 153.0 C372.5 154.3 371.3 157.7 374.2 158.2 C377.1 158.7 384.8 157.5 388.6 156.1 C392.4 154.7 392.9 151.8 396.8 150.0 C400.7 148.2 409.5 146.1 412.1 145.3" fill="none" stroke="#93aebd" stroke-width="1.6" stroke-dasharray="0.2 4.6" stroke-linecap="round"/><path d="M0.1 150.0 C1.0 150.8 3.7 152.9 5.3 154.6 C6.8 156.3 6.5 159.2 9.4 160.2 C12.3 161.2 19.8 161.3 22.7 160.7 C25.6 160.1 25.1 158.4 26.8 156.6 C28.5 154.8 30.8 150.7 32.9 150.0 C34.9 149.3 37.1 151.6 39.1 152.5 C41.2 153.4 43.0 156.6 45.2 155.6 C47.4 154.6 50.2 148.2 52.4 146.4 C54.6 144.6 54.5 144.6 58.6 144.8 C62.7 145.0 72.9 146.4 77.0 147.4 C81.1 148.3 81.2 149.1 83.2 150.5 C85.3 151.9 87.6 155.6 89.3 155.6 C91.0 155.6 92.0 154.1 93.4 150.5 C94.8 146.9 96.3 137.9 97.5 134.1 C98.7 130.3 99.4 128.2 100.6 127.9 C101.8 127.5 103.5 129.3 104.7 132.0 C105.9 134.7 106.4 139.0 107.8 144.3 C109.2 149.6 111.0 162.4 112.9 163.8 C114.8 165.2 117.4 154.9 119.1 152.5 C120.8 150.1 121.7 149.8 123.2 149.5 C124.7 149.2 126.1 150.2 128.3 150.5 C130.5 150.8 133.8 153.1 136.5 151.5 C139.2 149.9 142.3 142.7 144.7 141.2 C147.1 139.7 148.9 141.4 150.9 142.3 C153.0 143.2 155.3 146.4 157.0 146.9 C158.7 147.4 159.2 146.4 161.1 145.3 C163.0 144.2 165.9 139.7 168.3 140.2 C170.7 140.7 173.5 146.8 175.5 148.4 C177.5 150.0 178.5 150.4 180.6 150.0 C182.6 149.6 185.4 146.8 187.8 145.9 C190.2 144.9 193.0 145.6 195.0 144.3 C197.0 143.0 198.4 139.2 200.1 138.2 C201.8 137.2 203.1 137.8 205.0 138.2 C206.9 138.6 205.7 139.9 211.2 140.7 C216.7 141.5 232.3 142.1 237.8 142.8 C243.3 143.5 240.9 144.1 244.0 144.8 C247.1 145.5 252.5 147.1 256.3 146.9 C260.0 146.7 263.9 144.5 266.5 143.8 C269.1 143.1 270.0 144.2 271.7 142.8 C273.4 141.4 274.7 137.0 276.8 135.6 C278.8 134.2 281.1 134.6 284.0 134.6 C286.9 134.6 291.7 134.3 294.2 135.6 C296.8 136.9 297.1 140.8 299.3 142.3 C301.5 143.8 305.4 143.7 307.5 144.8 C309.6 145.9 308.5 147.6 311.6 148.9 C314.7 150.2 322.8 151.1 326.0 152.5 C329.2 153.9 329.2 156.0 331.1 157.1 C333.0 158.2 334.7 158.6 337.3 159.2 C339.9 159.8 344.3 161.1 346.5 160.7 C348.7 160.3 349.2 159.5 350.6 156.6 C352.0 153.7 353.3 146.1 354.7 143.3 C356.1 140.5 357.4 139.6 358.8 139.7 C360.2 139.8 361.4 140.6 362.9 143.8 C364.4 147.1 365.6 155.9 368.0 159.2 C370.4 162.4 374.7 162.6 377.3 163.3 C379.9 164.0 381.4 163.8 383.4 163.3 C385.5 162.8 386.0 160.5 389.6 160.2 C393.2 159.8 400.9 160.6 405.0 161.2 C409.1 161.8 412.7 163.4 414.2 163.8" fill="none" stroke="#35a5dd" stroke-width="2.3" stroke-linejoin="round" stroke-linecap="round"/></g></svg>
<div class="t " style="left:996.0px;top:234.7px;font-size:18.68px;-webkit-text-stroke:0.6px #303030;color:#303030;"><span class="dot">Online store conversion rate</span></div>
<svg class="r" style="left:1345px;top:235px;" width="19" height="19" viewBox="0 0 19 19"><path d="M8 16.8 H5.5 C3.6 16.8 2.2 15.4 2.2 13.5 V5.5 C2.2 3.6 3.6 2.2 5.5 2.2 H13.5 C15.4 2.2 16.8 3.6 16.8 5.5 V8" fill="none" stroke="#8a8a8a" stroke-width="1.8" stroke-linecap="round"/><path d="M5.8 6 H12.8 M5.8 9.4 H8" stroke="#8a8a8a" stroke-width="1.8" stroke-linecap="round"/><circle cx="13" cy="13" r="2.4" fill="none" stroke="#8a8a8a" stroke-width="1.7"/><path d="M14.8 14.8 L17.2 17.2" stroke="#8a8a8a" stroke-width="1.8" stroke-linecap="round"/></svg>
<div class="t val1" style="left:996.5px;top:271.9px;font-size:25.8px;-webkit-text-stroke:0.75px #303030;color:#303030;letter-spacing:-0.15px;">1.44%</div>
<div class="r" style="left:1405px;top:209px;width:414px;height:208px;background:#fff;border-radius:13px;box-shadow:0 1px 0 #d4d4d4, 0 0 0 1px #e9e9e9;"></div>
<svg class="r" style="left:1405px;top:209px;border-radius:13px;overflow:hidden" width="414" height="208" viewBox="0 0 414 208"><defs><linearGradient id="g2" x1="0" y1="120" x2="0" y2="182" gradientUnits="userSpaceOnUse"><stop offset="0" stop-color="#d3e9f8" stop-opacity="0.85"/><stop offset="0.55" stop-color="#e6f2fb" stop-opacity="0.6"/><stop offset="1" stop-color="#ffffff" stop-opacity="0"/></linearGradient><clipPath id="c2"><rect x="0" y="0" width="414" height="208" rx="13"/></clipPath></defs><g clip-path="url(#c2)"><path d="M0.1 150.5 C0.8 150.2 2.7 149.8 4.2 148.4 C5.8 147.0 7.5 143.6 9.4 142.3 C11.3 141.0 13.5 141.4 15.5 140.7 C17.5 140.0 18.6 138.9 21.7 138.2 C24.8 137.5 31.1 136.7 34.0 136.6 C36.9 136.5 37.4 136.9 39.1 137.7 C40.8 138.5 42.7 140.9 44.2 141.2 C45.7 141.4 46.8 141.8 48.3 139.2 C49.8 136.6 51.7 128.3 53.4 125.9 C55.1 123.5 55.7 125.1 58.6 124.8 C61.5 124.5 67.8 125.1 70.9 124.3 C74.0 123.5 75.1 120.6 77.0 120.2 C78.9 119.8 80.5 119.7 82.2 121.8 C83.9 123.9 85.4 130.4 87.3 133.0 C89.2 135.6 91.2 134.3 93.4 137.1 C95.6 139.9 98.7 148.1 100.6 150.0 C102.5 151.9 103.2 150.3 104.7 148.4 C106.2 146.5 106.5 140.3 109.8 138.7 C113.0 137.1 120.4 138.1 124.2 138.7 C128.0 139.3 129.7 141.9 132.4 142.3 C135.1 142.7 137.9 141.4 140.6 141.2 C143.3 141.0 146.1 139.0 148.8 141.2 C151.5 143.4 154.8 153.2 157.0 154.6 C159.2 156.0 160.2 152.8 162.1 149.5 C164.0 146.2 166.4 136.5 168.3 134.6 C170.2 132.7 171.7 135.9 173.4 138.2 C175.1 140.5 176.7 146.9 178.6 148.4 C180.5 149.8 182.8 147.3 184.7 146.9 C186.6 146.5 186.4 145.6 189.8 145.9 C193.2 146.1 201.8 146.3 205.0 148.4 C208.2 150.5 207.6 156.5 209.1 158.7 C210.6 160.9 211.8 162.4 214.2 161.8 C216.6 161.2 221.1 156.2 223.5 155.1 C225.9 154.0 226.7 155.6 228.6 155.1 C230.5 154.6 232.7 152.2 234.7 152.0 C236.8 151.8 238.7 153.0 240.9 153.6 C243.1 154.2 245.2 155.4 248.1 155.6 C251.0 155.9 255.9 154.8 258.3 155.1 C260.7 155.5 260.7 156.1 262.4 157.7 C264.1 159.3 266.2 164.1 268.6 164.8 C271.0 165.5 273.2 162.7 276.8 161.8 C280.4 161.0 286.0 159.3 290.1 159.7 C294.2 160.1 297.5 164.1 301.4 164.3 C305.3 164.6 309.8 160.6 313.7 161.2 C317.6 161.8 321.9 168.3 325.0 167.9 C328.1 167.5 330.0 160.7 332.2 158.7 C334.4 156.7 336.1 158.6 338.3 156.1 C340.5 153.6 342.8 146.5 345.5 143.8 C348.2 141.2 351.8 141.2 354.7 140.2 C357.6 139.2 360.5 139.1 362.9 137.7 C365.3 136.2 366.4 131.7 369.1 131.5 C371.8 131.3 376.2 135.9 379.3 136.6 C382.4 137.3 384.9 136.2 387.5 135.6 C390.1 135.0 392.1 134.4 394.7 133.0 C397.3 131.6 400.5 127.5 402.9 127.4 C405.3 127.3 407.2 130.5 409.1 132.5 C411.0 134.5 413.4 138.1 414.2 139.2 L414.2 208 L0.1 208 Z" fill="url(#g2)"/><path d="M2.7 155.6 C3.8 154.3 4.9 150.3 9.4 147.9 C13.9 145.5 24.4 143.8 29.9 141.2 C35.4 138.5 39.5 134.3 42.2 132.0 C44.9 129.7 43.0 128.1 46.3 127.4 C49.5 126.7 58.1 126.4 61.7 127.9 C65.3 129.4 64.0 135.2 67.8 136.6 C71.5 138.1 79.3 137.1 84.2 136.6 C89.2 136.1 92.7 134.8 97.5 133.6 C102.3 132.4 109.1 129.6 112.9 129.5 C116.7 129.4 116.7 130.4 120.1 133.0 C123.5 135.6 127.8 142.8 133.4 144.8 C139.0 146.9 147.9 145.3 153.9 145.3 C159.9 145.3 164.0 144.7 169.3 144.8 C174.6 144.9 181.3 146.4 185.7 145.9 C190.2 145.4 192.6 142.8 196.0 141.8 C199.4 140.8 203.3 137.6 206.0 139.7 C208.7 141.8 209.5 152.2 212.2 154.6 C214.9 157.0 219.0 153.5 222.4 154.1 C225.8 154.7 228.8 156.9 232.7 158.2 C236.6 159.5 242.6 161.9 246.0 161.8 C249.4 161.7 249.8 158.1 253.2 157.7 C256.6 157.3 261.6 159.1 266.5 159.2 C271.4 159.3 278.6 157.4 282.9 158.2 C287.2 159.0 287.2 162.4 292.2 163.8 C297.2 165.2 307.2 167.9 312.7 166.9 C318.2 165.9 321.9 160.8 325.0 157.7 C328.1 154.6 328.4 151.6 331.1 148.4 C333.8 145.1 337.3 141.2 341.4 138.2 C345.5 135.2 352.3 131.4 355.7 130.5 C359.1 129.6 359.7 131.1 361.9 132.5 C364.1 133.9 365.5 138.9 369.1 139.2 C372.7 139.5 378.8 133.8 383.4 134.1 C388.0 134.4 393.0 140.4 396.8 141.2 C400.6 142.0 404.5 139.1 406.0 138.7" fill="none" stroke="#93aebd" stroke-width="1.6" stroke-dasharray="0.2 4.6" stroke-linecap="round"/><path d="M0.1 150.5 C0.8 150.2 2.7 149.8 4.2 148.4 C5.8 147.0 7.5 143.6 9.4 142.3 C11.3 141.0 13.5 141.4 15.5 140.7 C17.5 140.0 18.6 138.9 21.7 138.2 C24.8 137.5 31.1 136.7 34.0 136.6 C36.9 136.5 37.4 136.9 39.1 137.7 C40.8 138.5 42.7 140.9 44.2 141.2 C45.7 141.4 46.8 141.8 48.3 139.2 C49.8 136.6 51.7 128.3 53.4 125.9 C55.1 123.5 55.7 125.1 58.6 124.8 C61.5 124.5 67.8 125.1 70.9 124.3 C74.0 123.5 75.1 120.6 77.0 120.2 C78.9 119.8 80.5 119.7 82.2 121.8 C83.9 123.9 85.4 130.4 87.3 133.0 C89.2 135.6 91.2 134.3 93.4 137.1 C95.6 139.9 98.7 148.1 100.6 150.0 C102.5 151.9 103.2 150.3 104.7 148.4 C106.2 146.5 106.5 140.3 109.8 138.7 C113.0 137.1 120.4 138.1 124.2 138.7 C128.0 139.3 129.7 141.9 132.4 142.3 C135.1 142.7 137.9 141.4 140.6 141.2 C143.3 141.0 146.1 139.0 148.8 141.2 C151.5 143.4 154.8 153.2 157.0 154.6 C159.2 156.0 160.2 152.8 162.1 149.5 C164.0 146.2 166.4 136.5 168.3 134.6 C170.2 132.7 171.7 135.9 173.4 138.2 C175.1 140.5 176.7 146.9 178.6 148.4 C180.5 149.8 182.8 147.3 184.7 146.9 C186.6 146.5 186.4 145.6 189.8 145.9 C193.2 146.1 201.8 146.3 205.0 148.4 C208.2 150.5 207.6 156.5 209.1 158.7 C210.6 160.9 211.8 162.4 214.2 161.8 C216.6 161.2 221.1 156.2 223.5 155.1 C225.9 154.0 226.7 155.6 228.6 155.1 C230.5 154.6 232.7 152.2 234.7 152.0 C236.8 151.8 238.7 153.0 240.9 153.6 C243.1 154.2 245.2 155.4 248.1 155.6 C251.0 155.9 255.9 154.8 258.3 155.1 C260.7 155.5 260.7 156.1 262.4 157.7 C264.1 159.3 266.2 164.1 268.6 164.8 C271.0 165.5 273.2 162.7 276.8 161.8 C280.4 161.0 286.0 159.3 290.1 159.7 C294.2 160.1 297.5 164.1 301.4 164.3 C305.3 164.6 309.8 160.6 313.7 161.2 C317.6 161.8 321.9 168.3 325.0 167.9 C328.1 167.5 330.0 160.7 332.2 158.7 C334.4 156.7 336.1 158.6 338.3 156.1 C340.5 153.6 342.8 146.5 345.5 143.8 C348.2 141.2 351.8 141.2 354.7 140.2 C357.6 139.2 360.5 139.1 362.9 137.7 C365.3 136.2 366.4 131.7 369.1 131.5 C371.8 131.3 376.2 135.9 379.3 136.6 C382.4 137.3 384.9 136.2 387.5 135.6 C390.1 135.0 392.1 134.4 394.7 133.0 C397.3 131.6 400.5 127.5 402.9 127.4 C405.3 127.3 407.2 130.5 409.1 132.5 C411.0 134.5 413.4 138.1 414.2 139.2" fill="none" stroke="#35a5dd" stroke-width="2.3" stroke-linejoin="round" stroke-linecap="round"/></g></svg>
<div class="t " style="left:1426.0px;top:234.9px;font-size:18.42px;-webkit-text-stroke:0.6px #303030;color:#303030;"><span class="dot">Average order value</span></div>
<svg class="r" style="left:1775px;top:235px;" width="19" height="19" viewBox="0 0 19 19"><path d="M8 16.8 H5.5 C3.6 16.8 2.2 15.4 2.2 13.5 V5.5 C2.2 3.6 3.6 2.2 5.5 2.2 H13.5 C15.4 2.2 16.8 3.6 16.8 5.5 V8" fill="none" stroke="#8a8a8a" stroke-width="1.8" stroke-linecap="round"/><path d="M5.8 6 H12.8 M5.8 9.4 H8" stroke="#8a8a8a" stroke-width="1.8" stroke-linecap="round"/><circle cx="13" cy="13" r="2.4" fill="none" stroke="#8a8a8a" stroke-width="1.7"/><path d="M14.8 14.8 L17.2 17.2" stroke="#8a8a8a" stroke-width="1.8" stroke-linecap="round"/></svg>
<div class="t val2" style="left:1426.5px;top:271.9px;font-size:25.8px;-webkit-text-stroke:0.75px #303030;color:#303030;letter-spacing:1.0px;">$148.74</div>
<div class="r" style="left:545px;top:432px;width:414px;height:208px;background:#fff;border-radius:13px;box-shadow:0 1px 0 #d4d4d4, 0 0 0 1px #e9e9e9;"></div>
<svg class="r" style="left:545px;top:432px;border-radius:13px;overflow:hidden" width="414" height="208" viewBox="0 0 414 208"><defs><linearGradient id="g3" x1="0" y1="122" x2="0" y2="184" gradientUnits="userSpaceOnUse"><stop offset="0" stop-color="#d3e9f8" stop-opacity="0.85"/><stop offset="0.55" stop-color="#e6f2fb" stop-opacity="0.6"/><stop offset="1" stop-color="#ffffff" stop-opacity="0"/></linearGradient><clipPath id="c3"><rect x="0" y="0" width="414" height="208" rx="13"/></clipPath></defs><g clip-path="url(#c3)"><path d="M0.1 159.5 C1.3 159.0 4.7 157.2 7.3 156.5 C9.9 155.8 12.6 156.3 15.5 155.4 C18.4 154.4 21.8 152.8 24.7 150.8 C27.6 148.7 29.6 143.2 32.9 143.1 C36.1 143.0 41.6 149.4 44.2 150.3 C46.8 151.1 46.2 150.2 48.3 148.2 C50.3 146.2 53.4 139.1 56.5 138.5 C59.6 137.9 63.2 144.1 66.8 144.7 C70.4 145.3 74.4 141.6 78.1 142.1 C81.9 142.6 86.7 147.2 89.3 147.7 C91.8 148.2 92.0 147.7 93.4 145.2 C94.8 142.7 96.3 135.3 97.5 132.9 C98.7 130.5 99.4 130.6 100.6 130.8 C101.8 131.0 103.5 131.3 104.7 133.9 C105.9 136.5 106.6 142.4 107.8 146.2 C109.0 150.0 110.5 155.5 111.9 156.5 C113.3 157.5 114.5 154.7 116.0 152.3 C117.5 149.9 119.1 143.8 121.1 142.1 C123.2 140.4 126.2 141.9 128.3 142.1 C130.3 142.4 131.7 143.6 133.4 143.6 C135.1 143.6 136.7 143.4 138.6 142.1 C140.5 140.8 142.7 136.2 144.7 135.9 C146.8 135.5 148.8 137.8 150.9 140.0 C152.9 142.2 154.1 149.6 157.0 149.3 C159.9 149.0 165.6 139.0 168.3 138.0 C171.0 137.0 171.7 141.1 173.4 143.1 C175.1 145.2 176.7 149.1 178.6 150.3 C180.5 151.5 182.5 150.6 184.7 150.3 C186.9 149.9 189.7 150.6 191.9 148.2 C194.1 145.8 195.8 137.9 198.0 135.9 C200.2 133.8 203.2 134.7 205.0 135.9 C206.8 137.1 207.4 141.5 209.1 143.1 C210.8 144.7 212.7 144.7 215.3 145.7 C217.9 146.7 221.3 149.7 224.5 149.3 C227.7 148.9 232.1 144.0 234.7 143.1 C237.3 142.2 238.3 143.5 239.9 144.1 C241.4 144.7 240.6 145.9 244.0 146.7 C247.4 147.5 256.3 148.1 260.4 148.8 C264.5 149.5 265.5 151.3 268.6 150.8 C271.7 150.3 275.0 146.7 278.8 145.7 C282.5 144.7 288.4 144.5 291.1 144.7 C293.8 144.9 293.8 145.5 295.2 146.7 C296.6 147.9 296.6 150.5 299.3 151.8 C302.0 153.1 308.9 153.9 311.6 154.4 C314.3 154.9 313.3 154.2 315.7 154.9 C318.1 155.6 322.2 158.0 326.0 158.5 C329.8 159.0 335.2 158.7 338.3 158.0 C341.4 157.3 342.8 155.2 344.5 154.4 C346.2 153.6 347.2 154.9 348.6 153.4 C350.0 151.9 351.3 148.5 352.7 145.2 C354.1 141.9 355.3 135.3 356.8 133.4 C358.3 131.5 360.2 132.9 361.9 133.9 C363.6 134.9 364.1 138.0 367.0 139.5 C369.9 141.0 375.2 142.6 379.3 143.1 C383.4 143.6 388.9 143.3 391.6 142.6 C394.3 141.9 394.3 142.3 395.7 139.0 C397.1 135.7 398.2 125.5 399.8 122.6 C401.3 119.7 403.4 120.2 405.0 121.6 C406.6 123.0 407.6 125.9 409.1 130.8 C410.6 135.7 413.4 147.5 414.2 150.8 L414.2 208 L0.1 208 Z" fill="url(#g3)"/><path d="M2.7 166.2 C3.3 165.6 5.0 164.9 6.3 162.6 C7.6 160.3 7.1 153.6 10.4 152.3 C13.6 151.0 20.5 156.3 25.8 154.9 C31.1 153.4 37.8 145.3 42.2 143.6 C46.6 141.9 50.0 143.8 52.4 144.7 C54.8 145.7 54.3 147.7 56.5 149.3 C58.7 150.9 61.5 153.7 65.8 154.4 C70.1 155.1 77.6 153.9 82.2 153.4 C86.8 152.9 90.8 153.3 93.4 151.3 C95.9 149.2 96.3 144.0 97.5 141.1 C98.7 138.2 98.9 133.4 100.6 133.9 C102.3 134.4 105.6 140.8 107.8 144.1 C110.0 147.4 111.2 152.0 113.9 153.9 C116.6 155.8 121.6 155.8 124.2 155.4 C126.8 155.0 127.1 154.0 129.3 151.3 C131.5 148.6 135.3 139.2 137.5 139.0 C139.7 138.8 139.8 147.3 142.7 150.3 C145.6 153.3 152.1 155.9 155.0 157.0 C157.9 158.1 157.7 158.0 160.1 157.0 C162.5 156.0 165.9 152.0 169.3 151.3 C172.7 150.6 175.3 156.1 180.6 152.9 C185.9 149.6 196.7 132.9 201.1 131.8 C205.5 130.7 205.4 142.1 207.1 146.2 C208.8 150.3 209.7 155.0 211.2 156.5 C212.7 158.0 214.6 157.1 216.3 155.4 C218.0 153.7 217.8 147.4 221.4 146.2 C225.0 145.0 231.0 148.5 237.8 148.2 C244.6 148.0 257.7 145.9 262.4 144.7 C267.1 143.5 264.4 141.5 266.0 141.1 C267.6 140.8 270.1 140.7 271.7 142.6 C273.3 144.5 273.7 150.0 275.8 152.3 C277.8 154.6 278.9 155.7 284.0 156.5 C289.1 157.3 300.5 156.2 306.5 157.0 C312.5 157.8 316.7 160.8 319.8 161.6 C322.9 162.5 323.4 163.8 325.0 162.1 C326.6 160.4 327.9 153.8 329.1 151.3 C330.3 148.8 330.7 148.0 332.2 147.2 C333.7 146.4 336.6 146.4 338.3 146.7 C340.0 147.1 339.0 148.5 342.4 149.3 C345.8 150.1 354.3 151.1 358.8 151.3 C363.2 151.5 365.7 149.9 369.1 150.3 C372.5 150.7 374.2 153.6 379.3 153.9 C384.4 154.2 395.7 152.0 399.8 152.3 C403.9 152.5 402.5 153.2 403.9 155.4 C405.3 157.6 407.3 164.0 408.0 165.7" fill="none" stroke="#93aebd" stroke-width="1.6" stroke-dasharray="0.2 4.6" stroke-linecap="round"/><path d="M0.1 159.5 C1.3 159.0 4.7 157.2 7.3 156.5 C9.9 155.8 12.6 156.3 15.5 155.4 C18.4 154.4 21.8 152.8 24.7 150.8 C27.6 148.7 29.6 143.2 32.9 143.1 C36.1 143.0 41.6 149.4 44.2 150.3 C46.8 151.1 46.2 150.2 48.3 148.2 C50.3 146.2 53.4 139.1 56.5 138.5 C59.6 137.9 63.2 144.1 66.8 144.7 C70.4 145.3 74.4 141.6 78.1 142.1 C81.9 142.6 86.7 147.2 89.3 147.7 C91.8 148.2 92.0 147.7 93.4 145.2 C94.8 142.7 96.3 135.3 97.5 132.9 C98.7 130.5 99.4 130.6 100.6 130.8 C101.8 131.0 103.5 131.3 104.7 133.9 C105.9 136.5 106.6 142.4 107.8 146.2 C109.0 150.0 110.5 155.5 111.9 156.5 C113.3 157.5 114.5 154.7 116.0 152.3 C117.5 149.9 119.1 143.8 121.1 142.1 C123.2 140.4 126.2 141.9 128.3 142.1 C130.3 142.4 131.7 143.6 133.4 143.6 C135.1 143.6 136.7 143.4 138.6 142.1 C140.5 140.8 142.7 136.2 144.7 135.9 C146.8 135.5 148.8 137.8 150.9 140.0 C152.9 142.2 154.1 149.6 157.0 149.3 C159.9 149.0 165.6 139.0 168.3 138.0 C171.0 137.0 171.7 141.1 173.4 143.1 C175.1 145.2 176.7 149.1 178.6 150.3 C180.5 151.5 182.5 150.6 184.7 150.3 C186.9 149.9 189.7 150.6 191.9 148.2 C194.1 145.8 195.8 137.9 198.0 135.9 C200.2 133.8 203.2 134.7 205.0 135.9 C206.8 137.1 207.4 141.5 209.1 143.1 C210.8 144.7 212.7 144.7 215.3 145.7 C217.9 146.7 221.3 149.7 224.5 149.3 C227.7 148.9 232.1 144.0 234.7 143.1 C237.3 142.2 238.3 143.5 239.9 144.1 C241.4 144.7 240.6 145.9 244.0 146.7 C247.4 147.5 256.3 148.1 260.4 148.8 C264.5 149.5 265.5 151.3 268.6 150.8 C271.7 150.3 275.0 146.7 278.8 145.7 C282.5 144.7 288.4 144.5 291.1 144.7 C293.8 144.9 293.8 145.5 295.2 146.7 C296.6 147.9 296.6 150.5 299.3 151.8 C302.0 153.1 308.9 153.9 311.6 154.4 C314.3 154.9 313.3 154.2 315.7 154.9 C318.1 155.6 322.2 158.0 326.0 158.5 C329.8 159.0 335.2 158.7 338.3 158.0 C341.4 157.3 342.8 155.2 344.5 154.4 C346.2 153.6 347.2 154.9 348.6 153.4 C350.0 151.9 351.3 148.5 352.7 145.2 C354.1 141.9 355.3 135.3 356.8 133.4 C358.3 131.5 360.2 132.9 361.9 133.9 C363.6 134.9 364.1 138.0 367.0 139.5 C369.9 141.0 375.2 142.6 379.3 143.1 C383.4 143.6 388.9 143.3 391.6 142.6 C394.3 141.9 394.3 142.3 395.7 139.0 C397.1 135.7 398.2 125.5 399.8 122.6 C401.3 119.7 403.4 120.2 405.0 121.6 C406.6 123.0 407.6 125.9 409.1 130.8 C410.6 135.7 413.4 147.5 414.2 150.8" fill="none" stroke="#35a5dd" stroke-width="2.3" stroke-linejoin="round" stroke-linecap="round"/></g></svg>
<div class="t " style="left:566.0px;top:457.5px;font-size:18.84px;-webkit-text-stroke:0.6px #303030;color:#303030;"><span class="dot">Total sales</span></div>
<svg class="r" style="left:915px;top:458px;" width="19" height="19" viewBox="0 0 19 19"><path d="M8 16.8 H5.5 C3.6 16.8 2.2 15.4 2.2 13.5 V5.5 C2.2 3.6 3.6 2.2 5.5 2.2 H13.5 C15.4 2.2 16.8 3.6 16.8 5.5 V8" fill="none" stroke="#8a8a8a" stroke-width="1.8" stroke-linecap="round"/><path d="M5.8 6 H12.8 M5.8 9.4 H8" stroke="#8a8a8a" stroke-width="1.8" stroke-linecap="round"/><circle cx="13" cy="13" r="2.4" fill="none" stroke="#8a8a8a" stroke-width="1.7"/><path d="M14.8 14.8 L17.2 17.2" stroke="#8a8a8a" stroke-width="1.8" stroke-linecap="round"/></svg>
<div class="t val3" style="left:566.5px;top:494.9px;font-size:25.8px;-webkit-text-stroke:0.75px #303030;color:#303030;letter-spacing:1.0px;">$1,780,509.82</div>
<div class="r" style="left:975px;top:432px;width:414px;height:208px;background:#fff;border-radius:13px;box-shadow:0 1px 0 #d4d4d4, 0 0 0 1px #e9e9e9;"></div>
<svg class="r" style="left:975px;top:432px;border-radius:13px;overflow:hidden" width="414" height="208" viewBox="0 0 414 208"><defs><linearGradient id="g4" x1="0" y1="121" x2="0" y2="183" gradientUnits="userSpaceOnUse"><stop offset="0" stop-color="#d3e9f8" stop-opacity="0.85"/><stop offset="0.55" stop-color="#e6f2fb" stop-opacity="0.6"/><stop offset="1" stop-color="#ffffff" stop-opacity="0"/></linearGradient><clipPath id="c4"><rect x="0" y="0" width="414" height="208" rx="13"/></clipPath></defs><g clip-path="url(#c4)"><path d="M0.1 161.1 C0.8 160.7 2.8 159.8 4.2 158.5 C5.6 157.2 6.4 154.6 8.3 153.4 C10.2 152.2 12.9 152.2 15.5 151.3 C18.1 150.4 20.8 150.5 23.7 148.2 C26.6 145.9 29.5 137.8 32.9 137.5 C36.3 137.2 41.6 145.5 44.2 146.7 C46.8 147.9 46.2 147.1 48.3 144.7 C50.3 142.3 53.4 133.3 56.5 132.4 C59.6 131.4 63.2 138.4 66.8 139.0 C70.4 139.6 74.3 135.7 78.1 135.9 C81.8 136.1 86.7 139.7 89.3 140.0 C91.8 140.3 92.0 140.2 93.4 137.5 C94.8 134.8 96.1 126.3 97.5 123.6 C98.9 120.9 100.2 120.8 101.6 121.1 C103.0 121.5 103.8 121.6 105.7 125.7 C107.6 129.8 110.3 144.2 112.9 145.7 C115.5 147.2 117.3 136.6 121.1 134.9 C124.9 133.2 131.6 136.7 135.5 135.4 C139.4 134.1 141.3 126.7 144.7 127.2 C148.1 127.7 152.1 137.9 156.0 138.5 C159.9 139.1 164.9 130.5 168.3 130.8 C171.7 131.0 172.6 138.5 176.5 140.0 C180.4 141.5 188.0 142.1 191.9 140.0 C195.8 137.9 197.9 129.2 200.1 127.2 C202.3 125.2 203.5 126.8 205.0 128.2 C206.5 129.7 207.4 134.3 209.1 135.9 C210.8 137.4 212.6 136.8 215.3 137.5 C218.0 138.2 222.3 140.5 225.5 140.0 C228.7 139.5 232.3 135.0 234.7 134.4 C237.1 133.8 238.4 135.4 239.9 136.5 C241.5 137.6 240.6 140.0 244.0 141.1 C247.4 142.2 256.3 142.1 260.4 143.1 C264.5 144.1 266.2 147.0 268.6 147.2 C271.0 147.4 270.8 144.8 274.7 144.1 C278.6 143.4 287.9 142.2 292.2 143.1 C296.5 144.1 296.5 148.5 300.4 149.8 C304.3 151.1 312.0 149.9 315.7 150.8 C319.5 151.7 319.3 154.3 322.9 155.4 C326.5 156.5 333.9 158.0 337.3 157.5 C340.7 157.0 341.2 153.6 343.4 152.3 C345.6 151.0 348.2 152.3 350.6 149.8 C353.0 147.2 355.6 138.4 357.8 137.0 C360.0 135.6 362.0 139.0 363.9 141.1 C365.8 143.2 366.5 149.0 369.1 149.8 C371.7 150.6 375.9 146.1 379.3 145.7 C382.7 145.4 385.5 146.9 389.6 147.7 C393.7 148.5 400.8 148.7 403.9 150.3 C407.0 151.9 406.3 154.7 408.0 157.5 C409.7 160.3 413.2 165.6 414.2 167.2 L414.2 208 L0.1 208 Z" fill="url(#g4)"/><path d="M2.7 166.2 C3.5 165.7 6.2 164.5 7.3 163.1 C8.4 161.7 7.2 159.6 9.4 158.0 C11.6 156.4 17.9 154.1 20.6 153.4 C23.3 152.7 23.7 155.3 25.8 153.9 C27.8 152.5 30.2 147.3 32.9 145.2 C35.6 143.1 38.3 140.9 42.2 141.1 C46.1 141.4 52.6 145.0 56.5 146.7 C60.4 148.4 61.5 150.4 65.8 151.3 C70.1 152.1 77.8 152.3 82.2 151.8 C86.6 151.3 90.0 150.3 92.4 148.2 C94.8 146.1 94.8 141.9 96.5 139.0 C98.2 136.1 100.0 129.1 102.7 130.8 C105.4 132.5 109.5 146.2 112.9 149.3 C116.3 152.4 120.3 150.6 123.2 149.3 C126.1 148.0 127.8 143.4 130.4 141.6 C133.0 139.8 136.2 137.4 138.6 138.5 C141.0 139.6 141.3 145.6 144.7 148.2 C148.1 150.8 155.0 153.5 159.1 153.9 C163.2 154.2 165.0 151.3 169.3 150.3 C173.6 149.3 181.5 148.8 184.7 147.7 C188.0 146.6 186.9 145.4 188.8 143.6 C190.7 141.8 193.0 137.6 196.0 137.0 C199.0 136.4 204.5 137.8 207.1 140.0 C209.7 142.2 209.7 149.8 211.7 150.3 C213.8 150.8 215.9 144.0 219.4 143.1 C222.9 142.3 228.6 145.5 232.7 145.2 C236.8 144.9 239.0 142.0 244.0 141.1 C249.0 140.2 258.7 140.8 262.4 140.0 C266.2 139.2 264.9 136.8 266.5 136.5 C268.1 136.2 270.0 136.5 271.7 138.5 C273.4 140.5 273.6 145.6 276.8 148.2 C280.0 150.9 286.1 153.1 291.1 154.4 C296.0 155.7 301.5 154.6 306.5 155.9 C311.5 157.2 317.7 161.2 320.9 162.1 C324.2 163.0 324.5 163.0 326.0 161.1 C327.5 159.2 328.7 153.0 330.1 150.8 C331.5 148.6 331.8 148.0 334.2 147.7 C336.6 147.5 340.1 149.0 344.5 149.3 C348.9 149.6 355.4 149.0 360.9 149.3 C366.4 149.5 372.0 150.5 377.3 150.8 C382.6 151.1 387.8 150.5 392.7 151.3 C397.7 152.1 404.3 152.9 407.0 155.4 C409.7 157.9 408.7 164.4 409.1 166.2" fill="none" stroke="#93aebd" stroke-width="1.6" stroke-dasharray="0.2 4.6" stroke-linecap="round"/><path d="M0.1 161.1 C0.8 160.7 2.8 159.8 4.2 158.5 C5.6 157.2 6.4 154.6 8.3 153.4 C10.2 152.2 12.9 152.2 15.5 151.3 C18.1 150.4 20.8 150.5 23.7 148.2 C26.6 145.9 29.5 137.8 32.9 137.5 C36.3 137.2 41.6 145.5 44.2 146.7 C46.8 147.9 46.2 147.1 48.3 144.7 C50.3 142.3 53.4 133.3 56.5 132.4 C59.6 131.4 63.2 138.4 66.8 139.0 C70.4 139.6 74.3 135.7 78.1 135.9 C81.8 136.1 86.7 139.7 89.3 140.0 C91.8 140.3 92.0 140.2 93.4 137.5 C94.8 134.8 96.1 126.3 97.5 123.6 C98.9 120.9 100.2 120.8 101.6 121.1 C103.0 121.5 103.8 121.6 105.7 125.7 C107.6 129.8 110.3 144.2 112.9 145.7 C115.5 147.2 117.3 136.6 121.1 134.9 C124.9 133.2 131.6 136.7 135.5 135.4 C139.4 134.1 141.3 126.7 144.7 127.2 C148.1 127.7 152.1 137.9 156.0 138.5 C159.9 139.1 164.9 130.5 168.3 130.8 C171.7 131.0 172.6 138.5 176.5 140.0 C180.4 141.5 188.0 142.1 191.9 140.0 C195.8 137.9 197.9 129.2 200.1 127.2 C202.3 125.2 203.5 126.8 205.0 128.2 C206.5 129.7 207.4 134.3 209.1 135.9 C210.8 137.4 212.6 136.8 215.3 137.5 C218.0 138.2 222.3 140.5 225.5 140.0 C228.7 139.5 232.3 135.0 234.7 134.4 C237.1 133.8 238.4 135.4 239.9 136.5 C241.5 137.6 240.6 140.0 244.0 141.1 C247.4 142.2 256.3 142.1 260.4 143.1 C264.5 144.1 266.2 147.0 268.6 147.2 C271.0 147.4 270.8 144.8 274.7 144.1 C278.6 143.4 287.9 142.2 292.2 143.1 C296.5 144.1 296.5 148.5 300.4 149.8 C304.3 151.1 312.0 149.9 315.7 150.8 C319.5 151.7 319.3 154.3 322.9 155.4 C326.5 156.5 333.9 158.0 337.3 157.5 C340.7 157.0 341.2 153.6 343.4 152.3 C345.6 151.0 348.2 152.3 350.6 149.8 C353.0 147.2 355.6 138.4 357.8 137.0 C360.0 135.6 362.0 139.0 363.9 141.1 C365.8 143.2 366.5 149.0 369.1 149.8 C371.7 150.6 375.9 146.1 379.3 145.7 C382.7 145.4 385.5 146.9 389.6 147.7 C393.7 148.5 400.8 148.7 403.9 150.3 C407.0 151.9 406.3 154.7 408.0 157.5 C409.7 160.3 413.2 165.6 414.2 167.2" fill="none" stroke="#35a5dd" stroke-width="2.3" stroke-linejoin="round" stroke-linecap="round"/></g></svg>
<div class="t " style="left:996.0px;top:457.5px;font-size:18.93px;-webkit-text-stroke:0.6px #303030;color:#303030;"><span class="dot">Sales attributed to marketing</span></div>
<svg class="r" style="left:1345px;top:458px;" width="19" height="19" viewBox="0 0 19 19"><path d="M8 16.8 H5.5 C3.6 16.8 2.2 15.4 2.2 13.5 V5.5 C2.2 3.6 3.6 2.2 5.5 2.2 H13.5 C15.4 2.2 16.8 3.6 16.8 5.5 V8" fill="none" stroke="#8a8a8a" stroke-width="1.8" stroke-linecap="round"/><path d="M5.8 6 H12.8 M5.8 9.4 H8" stroke="#8a8a8a" stroke-width="1.8" stroke-linecap="round"/><circle cx="13" cy="13" r="2.4" fill="none" stroke="#8a8a8a" stroke-width="1.7"/><path d="M14.8 14.8 L17.2 17.2" stroke="#8a8a8a" stroke-width="1.8" stroke-linecap="round"/></svg>
<div class="t val4" style="left:996.5px;top:494.9px;font-size:25.8px;-webkit-text-stroke:0.75px #303030;color:#303030;letter-spacing:1.0px;">$1,720,633.92</div>
<div class="r" style="left:1405px;top:432px;width:414px;height:208px;background:#fff;border-radius:13px;box-shadow:0 1px 0 #d4d4d4, 0 0 0 1px #e9e9e9;"></div>
<svg class="r" style="left:1405px;top:432px;border-radius:13px;overflow:hidden" width="414" height="208" viewBox="0 0 414 208"><defs><linearGradient id="g5" x1="0" y1="121" x2="0" y2="183" gradientUnits="userSpaceOnUse"><stop offset="0" stop-color="#d3e9f8" stop-opacity="0.85"/><stop offset="0.55" stop-color="#e6f2fb" stop-opacity="0.6"/><stop offset="1" stop-color="#ffffff" stop-opacity="0"/></linearGradient><clipPath id="c5"><rect x="0" y="0" width="414" height="208" rx="13"/></clipPath></defs><g clip-path="url(#c5)"><path d="M0.1 159.5 C0.6 159.4 1.8 159.9 3.2 159.0 C4.6 158.1 6.6 154.9 8.3 153.9 C10.0 152.9 10.9 153.4 13.5 152.9 C16.1 152.4 20.5 152.7 23.7 150.8 C26.9 148.9 29.3 141.9 32.9 141.6 C36.5 141.3 42.3 147.9 45.2 148.8 C48.1 149.7 48.5 148.4 50.4 147.2 C52.3 146.0 54.1 141.8 56.5 141.6 C58.9 141.4 61.3 145.6 64.7 146.2 C68.1 146.8 72.7 145.5 77.0 145.2 C81.3 145.0 87.5 145.7 90.4 144.7 C93.3 143.7 93.3 142.3 94.5 139.0 C95.7 135.7 96.3 127.7 97.5 124.7 C98.7 121.7 100.2 120.9 101.6 121.1 C103.0 121.3 104.5 121.7 105.7 125.7 C106.9 129.7 107.6 141.4 108.8 145.2 C110.0 149.1 110.7 150.1 112.9 148.8 C115.1 147.5 118.4 139.4 122.2 137.5 C126.0 135.6 131.6 138.6 135.5 137.5 C139.4 136.4 142.5 131.1 145.7 130.8 C149.0 130.4 150.9 134.4 155.0 135.4 C159.1 136.3 166.5 135.6 170.3 136.5 C174.0 137.4 173.7 139.8 177.5 140.6 C181.3 141.4 189.3 143.1 192.9 141.1 C196.5 139.1 197.1 131.0 199.1 128.8 C201.1 126.6 203.0 127.4 205.0 127.7 C207.0 128.0 209.3 130.1 211.2 130.8 C213.1 131.5 214.2 130.7 216.3 131.8 C218.3 132.9 221.6 136.6 223.5 137.5 C225.4 138.4 225.7 137.7 227.6 137.0 C229.5 136.3 232.7 133.8 234.7 133.4 C236.8 133.0 238.4 133.6 239.9 134.4 C241.5 135.2 241.3 137.1 244.0 138.0 C246.7 138.9 251.7 139.6 256.3 140.0 C260.9 140.4 268.0 141.1 271.7 140.6 C275.5 140.1 275.4 137.6 278.8 137.0 C282.2 136.4 288.6 136.0 292.2 137.0 C295.8 138.0 297.9 141.8 300.4 143.1 C303.0 144.4 304.8 144.1 307.5 144.7 C310.2 145.3 314.4 145.9 316.8 146.7 C319.2 147.5 319.9 148.6 321.9 149.3 C324.0 150.0 326.9 149.9 329.1 150.8 C331.3 151.7 332.0 154.4 335.2 154.9 C338.5 155.4 345.5 155.5 348.6 153.9 C351.7 152.3 352.0 147.5 353.7 145.2 C355.4 142.9 357.1 140.3 358.8 140.0 C360.5 139.7 362.2 141.3 363.9 143.6 C365.6 145.9 366.5 153.0 369.1 153.9 C371.7 154.8 375.0 149.5 379.3 148.8 C383.6 148.1 390.4 149.2 394.7 149.8 C399.0 150.4 402.6 150.5 405.0 152.3 C407.4 154.1 407.4 158.2 409.1 160.6 C410.8 163.0 414.0 165.7 415.0 166.7 L415.0 208 L0.1 208 Z" fill="url(#g5)"/><path d="M3.2 165.2 C3.9 164.7 6.1 163.6 7.3 162.1 C8.5 160.7 7.2 157.9 10.4 156.5 C13.7 155.1 22.7 155.4 26.8 153.9 C30.9 152.4 30.2 148.1 35.0 147.7 C39.8 147.3 47.6 150.2 55.5 151.3 C63.4 152.4 76.1 154.6 82.2 154.4 C88.4 154.2 89.2 153.0 92.4 150.3 C95.6 147.6 99.0 139.5 101.6 138.0 C104.2 136.5 105.7 138.5 107.8 141.1 C109.9 143.7 111.1 151.6 114.0 153.4 C116.9 155.2 122.3 153.5 125.2 151.8 C128.1 150.1 129.2 144.9 131.4 143.1 C133.6 141.3 136.4 140.0 138.6 141.1 C140.8 142.2 142.0 147.7 144.7 149.8 C147.4 151.8 150.5 153.3 155.0 153.4 C159.5 153.5 167.0 150.7 171.4 150.3 C175.8 149.9 178.5 151.8 181.6 150.8 C184.7 149.8 186.7 147.1 189.8 144.1 C192.9 141.1 197.4 134.3 200.1 132.9 C202.8 131.5 204.5 133.8 206.0 135.9 C207.5 138.0 207.7 143.6 209.1 145.7 C210.5 147.9 212.5 149.6 214.2 148.8 C215.9 147.9 215.8 141.9 219.4 140.6 C223.0 139.3 228.6 141.8 235.8 141.1 C243.0 140.4 257.3 138.1 262.4 136.5 C267.5 134.9 264.9 132.3 266.5 131.8 C268.1 131.3 270.2 131.5 271.7 133.4 C273.3 135.3 272.9 140.5 275.8 143.1 C278.7 145.8 283.3 147.8 289.1 149.3 C294.9 150.8 305.6 150.8 310.6 152.3 C315.5 153.8 316.6 157.3 318.8 158.5 C321.0 159.7 322.2 159.9 323.9 159.5 C325.6 159.1 327.4 157.9 329.1 155.9 C330.8 153.9 331.6 148.6 334.2 147.7 C336.8 146.9 340.1 150.1 344.5 150.8 C348.9 151.5 356.5 151.8 360.9 151.8 C365.3 151.8 367.7 150.4 371.1 150.8 C374.5 151.1 377.8 153.6 381.4 153.9 C385.0 154.1 388.6 151.9 392.7 152.3 C396.8 152.7 403.3 154.2 406.0 156.5 C408.7 158.8 408.6 164.6 409.1 166.2" fill="none" stroke="#93aebd" stroke-width="1.6" stroke-dasharray="0.2 4.6" stroke-linecap="round"/><path d="M0.1 159.5 C0.6 159.4 1.8 159.9 3.2 159.0 C4.6 158.1 6.6 154.9 8.3 153.9 C10.0 152.9 10.9 153.4 13.5 152.9 C16.1 152.4 20.5 152.7 23.7 150.8 C26.9 148.9 29.3 141.9 32.9 141.6 C36.5 141.3 42.3 147.9 45.2 148.8 C48.1 149.7 48.5 148.4 50.4 147.2 C52.3 146.0 54.1 141.8 56.5 141.6 C58.9 141.4 61.3 145.6 64.7 146.2 C68.1 146.8 72.7 145.5 77.0 145.2 C81.3 145.0 87.5 145.7 90.4 144.7 C93.3 143.7 93.3 142.3 94.5 139.0 C95.7 135.7 96.3 127.7 97.5 124.7 C98.7 121.7 100.2 120.9 101.6 121.1 C103.0 121.3 104.5 121.7 105.7 125.7 C106.9 129.7 107.6 141.4 108.8 145.2 C110.0 149.1 110.7 150.1 112.9 148.8 C115.1 147.5 118.4 139.4 122.2 137.5 C126.0 135.6 131.6 138.6 135.5 137.5 C139.4 136.4 142.5 131.1 145.7 130.8 C149.0 130.4 150.9 134.4 155.0 135.4 C159.1 136.3 166.5 135.6 170.3 136.5 C174.0 137.4 173.7 139.8 177.5 140.6 C181.3 141.4 189.3 143.1 192.9 141.1 C196.5 139.1 197.1 131.0 199.1 128.8 C201.1 126.6 203.0 127.4 205.0 127.7 C207.0 128.0 209.3 130.1 211.2 130.8 C213.1 131.5 214.2 130.7 216.3 131.8 C218.3 132.9 221.6 136.6 223.5 137.5 C225.4 138.4 225.7 137.7 227.6 137.0 C229.5 136.3 232.7 133.8 234.7 133.4 C236.8 133.0 238.4 133.6 239.9 134.4 C241.5 135.2 241.3 137.1 244.0 138.0 C246.7 138.9 251.7 139.6 256.3 140.0 C260.9 140.4 268.0 141.1 271.7 140.6 C275.5 140.1 275.4 137.6 278.8 137.0 C282.2 136.4 288.6 136.0 292.2 137.0 C295.8 138.0 297.9 141.8 300.4 143.1 C303.0 144.4 304.8 144.1 307.5 144.7 C310.2 145.3 314.4 145.9 316.8 146.7 C319.2 147.5 319.9 148.6 321.9 149.3 C324.0 150.0 326.9 149.9 329.1 150.8 C331.3 151.7 332.0 154.4 335.2 154.9 C338.5 155.4 345.5 155.5 348.6 153.9 C351.7 152.3 352.0 147.5 353.7 145.2 C355.4 142.9 357.1 140.3 358.8 140.0 C360.5 139.7 362.2 141.3 363.9 143.6 C365.6 145.9 366.5 153.0 369.1 153.9 C371.7 154.8 375.0 149.5 379.3 148.8 C383.6 148.1 390.4 149.2 394.7 149.8 C399.0 150.4 402.6 150.5 405.0 152.3 C407.4 154.1 407.4 158.2 409.1 160.6 C410.8 163.0 414.0 165.7 415.0 166.7" fill="none" stroke="#35a5dd" stroke-width="2.3" stroke-linejoin="round" stroke-linecap="round"/></g></svg>
<div class="t " style="left:1426.0px;top:457.4px;font-size:19.05px;-webkit-text-stroke:0.6px #303030;color:#303030;"><span class="dot">Orders attributed to marketing</span></div>
<svg class="r" style="left:1775px;top:458px;" width="19" height="19" viewBox="0 0 19 19"><path d="M8 16.8 H5.5 C3.6 16.8 2.2 15.4 2.2 13.5 V5.5 C2.2 3.6 3.6 2.2 5.5 2.2 H13.5 C15.4 2.2 16.8 3.6 16.8 5.5 V8" fill="none" stroke="#8a8a8a" stroke-width="1.8" stroke-linecap="round"/><path d="M5.8 6 H12.8 M5.8 9.4 H8" stroke="#8a8a8a" stroke-width="1.8" stroke-linecap="round"/><circle cx="13" cy="13" r="2.4" fill="none" stroke="#8a8a8a" stroke-width="1.7"/><path d="M14.8 14.8 L17.2 17.2" stroke="#8a8a8a" stroke-width="1.8" stroke-linecap="round"/></svg>
<div class="t val5" style="left:1426.5px;top:494.9px;font-size:25.8px;-webkit-text-stroke:0.75px #303030;color:#303030;letter-spacing:1.5px;">11,623</div>
<svg class="r" style="left:676px;top:281px;" width="10" height="10" viewBox="0 0 10 10"><path d="M1.6 8.6 L6 4.2" stroke="#29845a" stroke-width="1.9" stroke-linecap="round"/><path d="M3.2 1.2 H8.8 V6.8 Z" fill="#29845a"/></svg>
<div class="t " style="left:689.8px;top:279.6px;font-size:14.6px;font-weight:700;color:#29845a;">21%</div>
<svg class="r" style="left:1080px;top:281px;" width="10" height="10" viewBox="0 0 10 10"><path d="M1.6 1.4 L6 5.8" stroke="#616161" stroke-width="1.9" stroke-linecap="round"/><path d="M3.2 8.8 H8.8 V3.2 Z" fill="#616161"/></svg>
<div class="t " style="left:1092.4px;top:279.6px;font-size:14.6px;font-weight:700;color:#616161;">2%</div>
<svg class="r" style="left:1538px;top:281px;" width="10" height="10" viewBox="0 0 10 10"><path d="M1.6 1.4 L6 5.8" stroke="#616161" stroke-width="1.9" stroke-linecap="round"/><path d="M3.2 8.8 H8.8 V3.2 Z" fill="#616161"/></svg>
<div class="t " style="left:1549.6px;top:279.6px;font-size:14.6px;font-weight:700;color:#616161;">0%</div>
<svg class="r" style="left:752px;top:504px;" width="10" height="10" viewBox="0 0 10 10"><path d="M1.6 8.6 L6 4.2" stroke="#29845a" stroke-width="1.9" stroke-linecap="round"/><path d="M3.2 1.2 H8.8 V6.8 Z" fill="#29845a"/></svg>
<div class="t " style="left:765.3px;top:502.6px;font-size:14.6px;font-weight:700;color:#29845a;">26%</div>
<svg class="r" style="left:1182px;top:504px;" width="10" height="10" viewBox="0 0 10 10"><path d="M1.6 8.6 L6 4.2" stroke="#29845a" stroke-width="1.9" stroke-linecap="round"/><path d="M3.2 1.2 H8.8 V6.8 Z" fill="#29845a"/></svg>
<div class="t " style="left:1195.5px;top:502.6px;font-size:14.6px;font-weight:700;color:#29845a;">22%</div>
<svg class="r" style="left:1521px;top:504px;" width="10" height="10" viewBox="0 0 10 10"><path d="M1.6 8.6 L6 4.2" stroke="#29845a" stroke-width="1.9" stroke-linecap="round"/><path d="M3.2 1.2 H8.8 V6.8 Z" fill="#29845a"/></svg>
<div class="t " style="left:1534.5px;top:502.6px;font-size:14.6px;font-weight:700;color:#29845a;">24%</div>
<div class="r" style="left:545px;top:661px;width:1274px;height:404px;background:#fff;border-radius:13px;box-shadow:0 1px 0 #d4d4d4, 0 0 0 1px #e9e9e9;"></div>
<div class="t " style="left:566.3px;top:685.9px;font-size:18.7px;-webkit-text-stroke:0.65px #303030;color:#303030;">Top marketing channels</div>
<div class="t " style="right:250.7px;top:686.1px;font-size:18.4px;-webkit-text-stroke:0.2px #2a64c9;color:#2a64c9;">View report</div>
<div class="r" style="left:566px;top:719px;width:1232px;height:48px;background:#eaf4ff;border-radius:10px;"></div>
<svg class="r" style="left:580px;top:733px;" width="20" height="20" viewBox="0 0 20 20"><circle cx="10" cy="10" r="8.2" fill="none" stroke="#1f4357" stroke-width="2"/><path d="M10 9 V14.3" stroke="#1f4357" stroke-width="2.1" stroke-linecap="round"/><circle cx="10" cy="6.2" r="1.2" fill="#1f4357"/></svg>
<div class="t " style="left:611.0px;top:733.7px;font-size:18.4px;-webkit-text-stroke:0.25px #24495e;color:#24495e;">Cost, click, and impression metrics are now available for supported marketing apps. <span style="text-decoration:underline;text-underline-offset:2.5px;text-decoration-thickness:1.3px">Learn more</span></div>
<svg class="r" style="left:1767px;top:736px;" width="16" height="16" viewBox="0 0 16 16"><path d="M1.8 1.8 L14.2 14.2 M14.2 1.8 L1.8 14.2" stroke="#0c3550" stroke-width="2" stroke-linecap="round"/></svg>
<div class="r" style="left:567px;top:778px;width:1230px;height:264px;background:#fff;border-radius:9px;box-shadow:0 0 0 1px #e3e3e3;"></div>
<div class="r" style="left:567px;top:778px;width:1230px;height:47px;background:#f7f7f7;border-radius:9px 9px 0 0;border-bottom:1px solid #e3e3e3;"></div>
<div class="t " style="left:583.2px;top:791.8px;font-size:17.0px;-webkit-text-stroke:0.35px #616161;color:#616161;"><span class="dot2">Channel</span></div>
<div class="t " style="left:803.6px;top:791.8px;font-size:17.0px;-webkit-text-stroke:0.35px #616161;color:#616161;"><span class="dot2">Type</span></div>
<div class="t " style="right:1033.8px;top:791.8px;font-size:17.0px;-webkit-text-stroke:0.35px #616161;color:#616161;"><span class="dot2">Sessions</span></div>
<svg class="r" style="left:1022px;top:793px;" width="12" height="17" viewBox="0 0 12 17"><path d="M2.5 6 L6 2.6 L9.5 6" fill="none" stroke="#616161" stroke-width="1.6" stroke-linecap="round" stroke-linejoin="round"/><path d="M2.5 11 L6 14.4 L9.5 11" fill="none" stroke="#1a1a1a" stroke-width="1.9" stroke-linecap="round" stroke-linejoin="round"/></svg>
<div class="t " style="right:858.0px;top:791.8px;font-size:17.0px;-webkit-text-stroke:0.35px #616161;color:#616161;"><span class="dot2">Sales</span></div>
<div class="t " style="right:741.4px;top:791.8px;font-size:17.0px;-webkit-text-stroke:0.35px #616161;color:#616161;"><span class="dot2">Orders</span></div>
<div class="t " style="right:572.5px;top:791.8px;font-size:17.0px;-webkit-text-stroke:0.35px #616161;color:#616161;"><span class="dot2">Conversion rate</span></div>
<div class="t " style="right:468.2px;top:791.8px;font-size:17.0px;-webkit-text-stroke:0.35px #616161;color:#616161;"><span class="dot2">ROAS</span></div>
<div class="t " style="right:364.2px;top:791.8px;font-size:17.0px;-webkit-text-stroke:0.35px #616161;color:#616161;"><span class="dot2">CPA</span></div>
<div class="t " style="right:267.4px;top:791.8px;font-size:17.0px;-webkit-text-stroke:0.35px #616161;color:#616161;"><span class="dot2">CTR</span></div>
<div class="r" style="left:567px;top:869px;width:1230px;height:1px;background:#ebebeb;"></div>
<div class="r" style="left:567px;top:913px;width:1230px;height:1px;background:#ebebeb;"></div>
<div class="r" style="left:567px;top:956px;width:1230px;height:1px;background:#ebebeb;"></div>
<div class="r" style="left:567px;top:1000px;width:1230px;height:1px;background:#ebebeb;"></div>
<svg class="r" style="left:583px;top:835px;" width="19" height="19" viewBox="0 0 19 19"><rect x="0.5" y="0.5" width="18" height="18" rx="4" fill="#232323"/><path d="M4.5 5 H14.5 L11.5 9.5 L14.5 14 H4.5 Z" fill="#fff"/></svg>
<div class="t " style="left:612.3px;top:835.7px;font-size:18.3px;-webkit-text-stroke:0.6px #303030;color:#303030;">Klaviyo</div>
<div class="t " style="left:803.4px;top:838.1px;font-size:18.4px;color:#303030;">paid</div>
<div class="t " style="right:1012.6px;top:838.2px;font-size:18.3px;color:#303030;letter-spacing:0.55px;">264,130</div>
<div class="t " style="right:857.7px;top:838.2px;font-size:18.3px;color:#303030;letter-spacing:0.55px;">$523,334.36</div>
<div class="t " style="right:740.9px;top:838.2px;font-size:18.3px;color:#303030;letter-spacing:0.55px;">3,498</div>
<div class="t " style="right:573.0px;top:838.2px;font-size:18.3px;color:#303030;letter-spacing:0.55px;">1.32%</div>
<div class="r" style="left:1562.5px;top:846.5px;width:17.200000000000045px;height:2.0px;background:#4a4a4a;"></div>
<div class="r" style="left:1667px;top:846.5px;width:17.200000000000045px;height:2.0px;background:#4a4a4a;"></div>
<div class="r" style="left:1763.3px;top:846.5px;width:17.200000000000045px;height:2.0px;background:#4a4a4a;"></div>
<svg class="r" style="left:583px;top:879px;" width="19" height="19" viewBox="0 0 19 19"><defs><linearGradient id="fbg1" x1="0" y1="0" x2="0" y2="1"><stop offset="0" stop-color="#18acfe"/><stop offset="1" stop-color="#0163e0"/></linearGradient></defs><rect x="0" y="0" width="19" height="19" rx="4" fill="url(#fbg1)"/><path d="M13.2 19 V12.1 H15.5 L15.9 9.4 H13.2 V7.7 C13.2 6.9 13.5 6.3 14.6 6.3 H16 V3.9 C15.6 3.8 14.8 3.7 13.9 3.7 C11.9 3.7 10.5 4.9 10.5 7.2 V9.4 H8.2 V12.1 H10.5 V19 Z" fill="#fff"/></svg>
<div class="t " style="left:612.3px;top:879.7px;font-size:18.3px;-webkit-text-stroke:0.6px #303030;color:#303030;">Facebook</div>
<div class="t " style="left:803.4px;top:882.1px;font-size:18.4px;color:#303030;">unknown</div>
<div class="t " style="right:1012.6px;top:882.2px;font-size:18.3px;color:#303030;letter-spacing:0.55px;">206,753</div>
<div class="t " style="right:857.7px;top:882.2px;font-size:18.3px;color:#303030;letter-spacing:0.55px;">$541,485.82</div>
<div class="t " style="right:740.9px;top:882.2px;font-size:18.3px;color:#303030;letter-spacing:0.55px;">3,668</div>
<div class="t " style="right:573.0px;top:882.2px;font-size:18.3px;color:#303030;letter-spacing:0.55px;">1.77%</div>
<div class="r" style="left:1562.5px;top:890.5px;width:17.200000000000045px;height:2.0px;background:#4a4a4a;"></div>
<div class="r" style="left:1667px;top:890.5px;width:17.200000000000045px;height:2.0px;background:#4a4a4a;"></div>
<div class="r" style="left:1763.3px;top:890.5px;width:17.200000000000045px;height:2.0px;background:#4a4a4a;"></div>
<svg class="r" style="left:583px;top:923px;" width="19" height="19" viewBox="0 0 19 19"><path d="M1.5 2 H17.5 V6.5 H1.5 Z" fill="#4a4a4a"/><path d="M3 7.8 H16 V17 H12.2 V11.8 H6.8 V17 H3 Z" fill="#4a4a4a"/><path d="M5.5 3.3 V5.3 M9.5 3.3 V5.3 M13.5 3.3 V5.3" stroke="#fff" stroke-width="1"/></svg>
<div class="t " style="left:612.3px;top:923.7px;font-size:18.3px;-webkit-text-stroke:0.6px #303030;color:#303030;"><span class="dot3">Direct</span></div>
<div class="t " style="left:803.4px;top:926.1px;font-size:18.4px;color:#303030;">direct</div>
<div class="t " style="right:1012.6px;top:926.2px;font-size:18.3px;color:#303030;letter-spacing:0.55px;">165,015</div>
<div class="t " style="right:857.7px;top:926.2px;font-size:18.3px;color:#303030;letter-spacing:0.55px;">$126,008.47</div>
<div class="t " style="right:740.9px;top:926.2px;font-size:18.3px;color:#303030;letter-spacing:0.55px;">839</div>
<div class="t " style="right:573.0px;top:926.2px;font-size:18.3px;color:#303030;letter-spacing:0.55px;">0.51%</div>
<div class="r" style="left:1562.5px;top:934.5px;width:17.200000000000045px;height:2.0px;background:#4a4a4a;"></div>
<div class="r" style="left:1667px;top:934.5px;width:17.200000000000045px;height:2.0px;background:#4a4a4a;"></div>
<div class="r" style="left:1763.3px;top:934.5px;width:17.200000000000045px;height:2.0px;background:#4a4a4a;"></div>
<svg class="r" style="left:583px;top:966px;" width="19" height="19" viewBox="0 0 19 19"><path d="M17.6 9.7 C17.6 9.1 17.55 8.6 17.45 8.1 H9.5 V11.2 H14.1 C13.9 12.3 13.3 13.2 12.3 13.8 V15.8 H15 C16.6 14.4 17.6 12.2 17.6 9.7 Z" fill="#4285f4"/><path d="M9.5 17.8 C11.8 17.8 13.7 17 15 15.8 L12.3 13.8 C11.6 14.3 10.6 14.6 9.5 14.6 C7.3 14.6 5.4 13.1 4.8 11.1 H2 V13.1 C3.4 15.9 6.2 17.8 9.5 17.8 Z" fill="#34a853"/><path d="M4.8 11.1 C4.6 10.6 4.5 10 4.5 9.5 C4.5 9 4.6 8.4 4.8 7.9 V5.9 H2 C1.4 7 1.1 8.2 1.1 9.5 C1.1 10.8 1.4 12 2 13.1 Z" fill="#fbbc05"/><path d="M9.5 4.4 C10.8 4.4 11.9 4.8 12.8 5.7 L15.1 3.4 C13.7 2.1 11.8 1.2 9.5 1.2 C6.2 1.2 3.4 3.1 2 5.9 L4.8 7.9 C5.4 5.9 7.3 4.4 9.5 4.4 Z" fill="#ea4335"/></svg>
<div class="t " style="left:612.3px;top:966.7px;font-size:18.3px;-webkit-text-stroke:0.6px #303030;color:#303030;">Google Search</div>
<div class="t " style="left:803.4px;top:969.1px;font-size:18.4px;color:#303030;">organic</div>
<div class="t " style="right:1012.6px;top:969.2px;font-size:18.3px;color:#303030;letter-spacing:0.55px;">121,037</div>
<div class="t " style="right:857.7px;top:969.2px;font-size:18.3px;color:#303030;letter-spacing:0.55px;">$498,044.41</div>
<div class="t " style="right:740.9px;top:969.2px;font-size:18.3px;color:#303030;letter-spacing:0.55px;">3,433</div>
<div class="t " style="right:573.0px;top:969.2px;font-size:18.3px;color:#303030;letter-spacing:0.55px;">2.84%</div>
<div class="r" style="left:1562.5px;top:977.5px;width:17.200000000000045px;height:2.0px;background:#4a4a4a;"></div>
<div class="r" style="left:1667px;top:977.5px;width:17.200000000000045px;height:2.0px;background:#4a4a4a;"></div>
<div class="r" style="left:1763.3px;top:977.5px;width:17.200000000000045px;height:2.0px;background:#4a4a4a;"></div>
<svg class="r" style="left:583px;top:1010px;" width="19" height="19" viewBox="0 0 19 19"><defs><linearGradient id="fbg4" x1="0" y1="0" x2="0" y2="1"><stop offset="0" stop-color="#18acfe"/><stop offset="1" stop-color="#0163e0"/></linearGradient></defs><rect x="0" y="0" width="19" height="19" rx="4" fill="url(#fbg4)"/><path d="M13.2 19 V12.1 H15.5 L15.9 9.4 H13.2 V7.7 C13.2 6.9 13.5 6.3 14.6 6.3 H16 V3.9 C15.6 3.8 14.8 3.7 13.9 3.7 C11.9 3.7 10.5 4.9 10.5 7.2 V9.4 H8.2 V12.1 H10.5 V19 Z" fill="#fff"/></svg>
<div class="t " style="left:612.3px;top:1010.7px;font-size:18.3px;-webkit-text-stroke:0.6px #303030;color:#303030;">Facebook</div>
<div class="t " style="left:803.4px;top:1013.1px;font-size:18.4px;color:#303030;">paid</div>
<div class="t " style="right:1012.6px;top:1013.2px;font-size:18.3px;color:#303030;letter-spacing:0.55px;">33,920</div>
<div class="t " style="right:857.7px;top:1013.2px;font-size:18.3px;color:#303030;letter-spacing:0.55px;">$3,212.83</div>
<div class="t " style="right:740.9px;top:1013.2px;font-size:18.3px;color:#303030;letter-spacing:0.55px;">25</div>
<div class="t " style="right:573.0px;top:1013.2px;font-size:18.3px;color:#303030;letter-spacing:0.55px;">0.07%</div>
<div class="r" style="left:1562.5px;top:1021.5px;width:17.200000000000045px;height:2.0px;background:#4a4a4a;"></div>
<div class="r" style="left:1667px;top:1021.5px;width:17.200000000000045px;height:2.0px;background:#4a4a4a;"></div>
<div class="r" style="left:1763.3px;top:1021.5px;width:17.200000000000045px;height:2.0px;background:#4a4a4a;"></div>
<div class="r" style="left:552px;top:822px;width:956px;height:50px;border:3.5px solid #e8281a;box-sizing:border-box;"></div>
<div class="r" style="left:545px;top:1086px;width:1274px;height:217px;background:#fff;border-radius:13px;box-shadow:0 1px 0 #d4d4d4, 0 0 0 1px #e9e9e9;"></div>
<div class="t " style="left:565.7px;top:1111.1px;font-size:18.9px;-webkit-text-stroke:0.65px #303030;color:#303030;">Marketing app activities</div>
<div class="t " style="right:250.7px;top:1111.9px;font-size:18.0px;-webkit-text-stroke:0.2px #2a64c9;color:#2a64c9;">Explore apps</div>
<div class="r" style="left:567px;top:1145px;width:1230px;height:136px;background:#fff;border-radius:9px;box-shadow:0 0 0 1px #e3e3e3;"></div>
<div class="r" style="left:567px;top:1145px;width:1230px;height:48px;background:#f7f7f7;border-radius:9px 9px 0 0;border-bottom:1px solid #e3e3e3;"></div>
<div class="t " style="left:583.5px;top:1160.0px;font-size:17.2px;-webkit-text-stroke:0.35px #616161;color:#616161;">App</div>
<div class="t " style="left:979.7px;top:1159.9px;font-size:17.3px;-webkit-text-stroke:0.35px #616161;color:#616161;">Activities in progress</div>
<div class="t " style="left:1446.0px;top:1159.9px;font-size:17.4px;-webkit-text-stroke:0.35px #616161;color:#616161;">Last activity</div>
<div class="r" style="left:567px;top:1238px;width:1230px;height:1px;background:#ebebeb;"></div>
<svg class="r" style="left:583px;top:1207px;" width="19" height="19" viewBox="0 0 19 19"><rect x="0" y="0" width="19" height="19" rx="4.5" fill="#fbbf24"/><path d="M6.2 8.6 C6.8 11.4 12.2 11.4 12.8 8.6" stroke="#fde68a" stroke-width="1.6" fill="none" stroke-linecap="round"/></svg>
<div class="t " style="left:611.9px;top:1207.2px;font-size:18.0px;color:#303030;">Smile.io</div>
<svg class="r" style="left:583px;top:1251px;" width="19" height="18" viewBox="0 0 19 18"><path d="M1.5 4.5 C1.5 2.5 3 1.2 5 1.2 C7 1.2 8 2.2 9.5 2.2 C11 2.2 12 1.2 14 1.2 C16 1.2 17.5 2.5 17.5 4.5 V8 H1.5 Z" fill="#8dc455"/><path d="M1.5 7.5 H17.5 V15.5 C17.5 16.5 16.8 17 16 17 H13.5 C12.7 17 12 16.5 12 15.5 V12.2 H7 V15.5 C7 16.5 6.3 17 5.5 17 H3 C2.2 17 1.5 16.5 1.5 15.5 Z" fill="#3b6e24"/></svg>
<div class="t " style="left:611.9px;top:1251.6px;font-size:18.0px;color:#303030;">Online Store</div>
<div class="r" style="left:980px;top:1204px;width:115px;height:25px;background:#ebebeb;border-radius:10px;"></div>
<div class="t " style="left:989.7px;top:1208.0px;font-size:16.5px;color:#4a4a4a;">No status (1)</div>
<div class="r" style="left:980px;top:1247px;width:104px;height:26px;background:#ebebeb;border-radius:10px;"></div>
<div class="t " style="left:989.7px;top:1251.6px;font-size:16.5px;color:#4a4a4a;">Inactive (1)</div>
<div class="t " style="left:1446.0px;top:1206.9px;font-size:18.2px;color:#303030;">May 26, 2025</div>
<div class="t " style="left:1446.0px;top:1251.1px;font-size:18.2px;color:#303030;">Feb 3, 2023</div>
<div class="t " style="left:896.0px;top:1332.2px;font-size:17.0px;color:#303030;">Learn more about <span class="lk">marketing campaigns</span> and how <span class="lk">Shopify syncs report data.</span></div>
</body></html>
